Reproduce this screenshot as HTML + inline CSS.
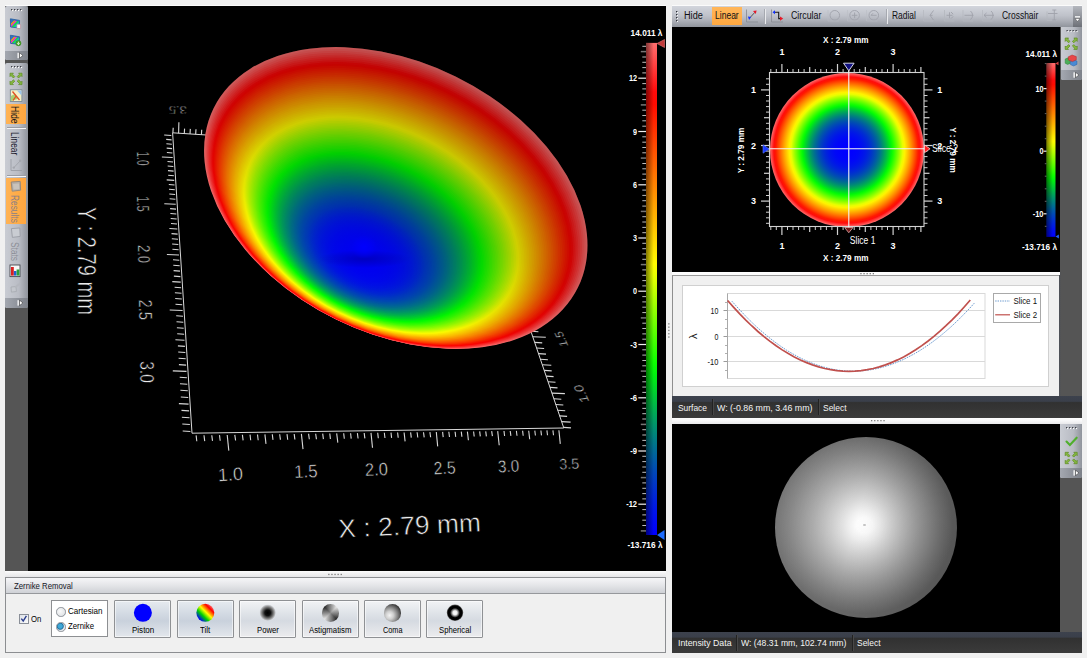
<!DOCTYPE html>
<html><head><meta charset="utf-8"><title>Surface</title>
<style>
html,body{margin:0;padding:0}
body{width:1087px;height:658px;overflow:hidden;background:#f0f0f0;position:relative;
 font-family:"Liberation Sans",sans-serif;font-size:10px;color:#000}
.abs{position:absolute}
.blk{position:absolute;background:#000}
.dk{position:absolute;background:#555}
.tb{position:absolute;background:linear-gradient(90deg,#c9ccd3 0%,#b9bcc4 60%,#8f939b 100%);border-radius:2px}
.tbh{position:absolute;background:linear-gradient(180deg,#d2d5dc 0%,#bfc2ca 45%,#adb0b8 70%,#90949c 100%)}
.status{position:absolute;background:linear-gradient(180deg,#3d424d 0%,#3a3f4a 24%,#313131 30%,#3b3b3b 100%);color:#f2f2f2;font-size:10px}
.status span{position:absolute;top:5px;white-space:nowrap}
.status i{position:absolute;top:2px;width:1px;height:17px;background:#222;border-right:1px solid #555}
svg{position:absolute;left:0;top:0;overflow:visible}
</style></head><body>

<div class="abs" style="left:5px;top:5px;width:661px;height:1px;background:#fbfbfb"></div>
<div class="abs" style="left:672px;top:5px;width:410px;height:1px;background:#fbfbfb"></div>
<div class="dk" style="left:5px;top:6px;width:23px;height:565px"></div>
<div class="blk" style="left:28px;top:6px;width:638px;height:565px"></div>
<div class="tb" style="left:5px;top:6px;width:23px;height:54px"></div>
<div class="abs" style="left:5px;top:51px;width:23px;height:9px;background:linear-gradient(90deg,#a4a8b0,#7d8189);border-radius:0 0 2px 2px"></div>
<div class="tb" style="left:5px;top:63px;width:23px;height:245px"></div>
<div class="abs" style="left:5px;top:298px;width:23px;height:10px;background:linear-gradient(90deg,#a4a8b0,#7d8189);border-radius:0 0 2px 2px"></div>
<div class="abs" style="left:6px;top:104px;width:20px;height:20px;background:linear-gradient(90deg,#ffb354,#ffa63f);border:0"></div>
<div class="abs" style="left:6px;top:178px;width:20px;height:46px;background:linear-gradient(90deg,#ffb354,#ffa63f)"></div>
<div class="abs" style="left:7px;top:128px;width:19px;height:1px;background:#f4f4f6;box-shadow:0 -1px 0 #9a9da4"></div>
<div class="abs" style="left:7px;top:176px;width:19px;height:1px;background:#f4f4f6;box-shadow:0 -1px 0 #9a9da4"></div>
<div class="abs" style="left:20.2px;top:105.8px;width:0;height:0"><div style="position:absolute;left:0;top:0;transform-origin:0 0;transform:rotate(90deg) scaleX(0.856);white-space:nowrap;font-size:10px;line-height:12px;color:#1a1a1a">Hide</div></div>
<div class="abs" style="left:20.2px;top:131.9px;width:0;height:0"><div style="position:absolute;left:0;top:0;transform-origin:0 0;transform:rotate(90deg) scaleX(0.835);white-space:nowrap;font-size:10px;line-height:12px;color:#1e1e32">Linear</div></div>
<div class="abs" style="left:20.2px;top:195.3px;width:0;height:0"><div style="position:absolute;left:0;top:0;transform-origin:0 0;transform:rotate(90deg) scaleX(0.834);white-space:nowrap;font-size:10px;line-height:12px;color:#8a7f86">Results</div></div>
<div class="abs" style="left:20.2px;top:242.0px;width:0;height:0"><div style="position:absolute;left:0;top:0;transform-origin:0 0;transform:rotate(90deg) scaleX(0.834);white-space:nowrap;font-size:10px;line-height:12px;color:#8d9098">Stats</div></div>
<div class="abs" style="left:5px;top:571px;width:661px;height:6px;background:linear-gradient(180deg,#fdfdfd,#f2f2f3 40%,#e6e6e8)"></div>
<div class="abs" style="left:5px;top:577px;width:661px;height:76px;box-sizing:border-box;border:1px solid #8c8e91;background:#f0f0f0"><div style="position:absolute;left:0;top:0;right:0;height:15px;background:linear-gradient(180deg,#f6f6f8 0%,#e4e5e8 50%,#cfd1d6 100%);border-bottom:1px solid #96989c"></div></div>
<span class="abs" style="left:14.3px;top:580.7px;font-size:9.2px;line-height:11px;white-space:nowrap;color:#15151f;transform-origin:0 50%;transform:scaleX(0.846)">Zernike Removal</span>
<div class="abs" style="left:19px;top:614px;width:8px;height:8px;border:1px solid #8a8f98;background:linear-gradient(135deg,#dfe3e8,#fafafa)"></div>
<span class="abs" style="left:31.0px;top:614.0px;font-size:9.2px;line-height:11px;white-space:nowrap;color:#000;transform-origin:0 50%;transform:scaleX(0.839)">On</span>
<div class="abs" style="left:51px;top:600px;width:57px;height:37px;box-sizing:border-box;border:1px solid #8d8f92;background:#fff"></div>
<div class="abs" style="left:56px;top:607.0px;width:7.5px;height:7.5px;border-radius:50%;border:1px solid #8b9097;background:radial-gradient(circle at 40% 40%,#fafafa 0,#d8dce0 100%)"></div>
<span class="abs" style="left:67.5px;top:606.4px;font-size:9.2px;line-height:11px;white-space:nowrap;color:#000;transform-origin:0 50%;transform:scaleX(0.876)">Cartesian</span>
<div class="abs" style="left:56px;top:622.0px;width:7.5px;height:7.5px;border-radius:50%;border:1px solid #8b9097;background:radial-gradient(circle at 40% 40%,#3fa8d8 0 30%,#1d6f9e 45%,#e4e8ec 60%)"></div>
<span class="abs" style="left:67.5px;top:621.4px;font-size:9.2px;line-height:11px;white-space:nowrap;color:#000;transform-origin:0 50%;transform:scaleX(0.848)">Zernike</span>
<div class="abs" style="left:114.3px;top:600px;width:57px;height:38px;box-sizing:border-box;border:1px solid #8f9194;border-radius:1px;background:linear-gradient(180deg,#e6eaef 0%,#d3dae3 35%,#c9d1dc 55%,#e3e7ec 100%);box-shadow:inset 0 0 0 1px rgba(255,255,255,.55)"></div>
<span class="abs" style="left:131.8px;top:625.0px;font-size:9.2px;line-height:11px;white-space:nowrap;color:#000;transform-origin:0 50%;transform:scaleX(0.872)">Piston</span>
<div class="abs" style="left:176.7px;top:600px;width:57px;height:38px;box-sizing:border-box;border:1px solid #8f9194;border-radius:1px;background:linear-gradient(180deg,#e6eaef 0%,#d3dae3 35%,#c9d1dc 55%,#e3e7ec 100%);box-shadow:inset 0 0 0 1px rgba(255,255,255,.55)"></div>
<span class="abs" style="left:200.2px;top:625.0px;font-size:9.2px;line-height:11px;white-space:nowrap;color:#000;transform-origin:0 50%;transform:scaleX(0.856)">Tilt</span>
<div class="abs" style="left:239.1px;top:600px;width:57px;height:38px;box-sizing:border-box;border:1px solid #8f9194;border-radius:1px;background:linear-gradient(180deg,#f2f3f5 0%,#dfe3e8 35%,#d5dae1 55%,#ececee 100%);box-shadow:inset 0 0 0 1px rgba(255,255,255,.55)"></div>
<span class="abs" style="left:256.8px;top:625.0px;font-size:9.2px;line-height:11px;white-space:nowrap;color:#000;transform-origin:0 50%;transform:scaleX(0.840)">Power</span>
<div class="abs" style="left:301.6px;top:600px;width:57px;height:38px;box-sizing:border-box;border:1px solid #8f9194;border-radius:1px;background:linear-gradient(180deg,#f2f3f5 0%,#dfe3e8 35%,#d5dae1 55%,#ececee 100%);box-shadow:inset 0 0 0 1px rgba(255,255,255,.55)"></div>
<span class="abs" style="left:308.9px;top:625.0px;font-size:9.2px;line-height:11px;white-space:nowrap;color:#000;transform-origin:0 50%;transform:scaleX(0.848)">Astigmatism</span>
<div class="abs" style="left:364.0px;top:600px;width:57px;height:38px;box-sizing:border-box;border:1px solid #8f9194;border-radius:1px;background:linear-gradient(180deg,#f2f3f5 0%,#dfe3e8 35%,#d5dae1 55%,#ececee 100%);box-shadow:inset 0 0 0 1px rgba(255,255,255,.55)"></div>
<span class="abs" style="left:382.8px;top:625.0px;font-size:9.2px;line-height:11px;white-space:nowrap;color:#000;transform-origin:0 50%;transform:scaleX(0.795)">Coma</span>
<div class="abs" style="left:426.4px;top:600px;width:57px;height:38px;box-sizing:border-box;border:1px solid #8f9194;border-radius:1px;background:linear-gradient(180deg,#f2f3f5 0%,#dfe3e8 35%,#d5dae1 55%,#ececee 100%);box-shadow:inset 0 0 0 1px rgba(255,255,255,.55)"></div>
<span class="abs" style="left:438.9px;top:625.0px;font-size:9.2px;line-height:11px;white-space:nowrap;color:#000;transform-origin:0 50%;transform:scaleX(0.840)">Spherical</span>
<div class="abs" style="left:321.6px;top:604.4px;width:17.2px;height:17.2px;border-radius:50%;background:radial-gradient(circle,rgba(140,140,140,.95) 0%,rgba(140,140,140,0) 75%),conic-gradient(from 315deg,#1c1c1c 0deg,#f0f0f0 90deg,#1c1c1c 180deg,#f0f0f0 270deg,#1c1c1c 360deg)"></div>
<div class="abs" style="left:384.0px;top:604.4px;width:17.2px;height:17.2px;border-radius:50%;background:radial-gradient(circle at 33% 63%,#f4f4f4 0%,#cfcfcf 24%,#858585 50%,#2e2e2e 78%,#4c4c4c 100%)"></div>
<div class="tbh" style="left:672px;top:6px;width:410px;height:21px"></div>
<div class="blk" style="left:672px;top:27px;width:388px;height:245px"></div>
<div class="dk" style="left:1060px;top:27px;width:22px;height:246px"></div>
<div class="dk" style="left:1059px;top:272px;width:23px;height:124px;background:linear-gradient(90deg,#4c5058 0,#555 2px)"></div>
<div class="abs" style="left:672px;top:275px;width:387px;height:121px;background:#f0f0f0;border-top:1px solid #9a9a9a;border-left:1px solid #8e8e8e;box-sizing:border-box"></div>
<div class="status" style="left:672px;top:396px;width:410px;height:21.5px"></div>
<div class="blk" style="left:672px;top:424px;width:388px;height:208px"></div>
<div class="dk" style="left:1060px;top:424px;width:22px;height:208px"></div>
<div class="status" style="left:672px;top:631.5px;width:410px;height:21.5px"></div>
<div class="abs" style="left:672px;top:272px;width:388px;height:3px;background:#fcfcfc"></div>
<div class="abs" style="left:672px;top:417.5px;width:410px;height:6.5px;background:linear-gradient(180deg,#fefefe 0%,#f6f6f7 50%,#e9e9eb 100%)"></div>
<div class="abs" style="left:1073px;top:6px;width:9px;height:21px;background:linear-gradient(180deg,#b4b7be,#6d7077)"></div>
<div class="abs" style="left:712px;top:7px;width:30px;height:18px;background:linear-gradient(180deg,#ffb65a,#ffa840)"></div>
<div class="abs" style="left:764.5px;top:9px;width:1px;height:15px;background:#e9eaed;box-shadow:-1px 0 0 #a6a9b0"></div>
<div class="abs" style="left:886.5px;top:9px;width:1px;height:15px;background:#e9eaed;box-shadow:-1px 0 0 #a6a9b0"></div>
<span class="abs" style="left:684.3px;top:10.3px;font-size:10.0px;line-height:12px;white-space:nowrap;color:#101014;transform-origin:0 50%;transform:scaleX(0.914)">Hide</span>
<span class="abs" style="left:715.3px;top:10.3px;font-size:10.0px;line-height:12px;white-space:nowrap;color:#101014;transform-origin:0 50%;transform:scaleX(0.853)">Linear</span>
<span class="abs" style="left:790.6px;top:10.3px;font-size:10.0px;line-height:12px;white-space:nowrap;color:#101014;transform-origin:0 50%;transform:scaleX(0.882)">Circular</span>
<span class="abs" style="left:892.0px;top:10.3px;font-size:10.0px;line-height:12px;white-space:nowrap;color:#101014;transform-origin:0 50%;transform:scaleX(0.843)">Radial</span>
<span class="abs" style="left:1001.7px;top:10.3px;font-size:10.0px;line-height:12px;white-space:nowrap;color:#101014;transform-origin:0 50%;transform:scaleX(0.848)">Crosshair</span>
<div class="abs" style="left:770px;top:72.5px;width:154px;height:154px;border-radius:50%;background:radial-gradient(circle closest-side,#0000ff 0.00%,#0000ff 2.50%,#0000ff 5.00%,#0001fe 7.50%,#0003fc 10.00%,#0005fa 12.50%,#0007f8 15.00%,#000bf4 17.50%,#0010ef 20.00%,#0015ea 22.50%,#001ce3 25.00%,#0024db 27.50%,#002dd2 30.00%,#0038c7 32.50%,#0044bb 35.00%,#0051ae 37.50%,#00609f 40.00%,#00708f 42.50%,#00827d 45.00%,#009669 47.50%,#00ab54 50.00%,#00c23d 52.50%,#00db24 55.00%,#00f609 57.50%,#19ff00 60.00%,#3fff00 62.50%,#67ff00 65.00%,#90ff00 67.50%,#bbff00 70.00%,#e7ff00 72.50%,#fff200 75.00%,#ffd600 77.50%,#ffb900 80.00%,#ff9b00 82.50%,#ff7c00 85.00%,#ff5c00 87.50%,#ff3b00 90.00%,#ff1900 92.50%,#ff0c0c 95.00%,#ff3d3d 97.50%,#ff6e6e 100.00%)"></div>
<div class="tb" style="left:1060.5px;top:27px;width:21.5px;height:53px;border-radius:0 0 2px 2px"></div>
<div class="abs" style="left:1060.5px;top:70px;width:21.5px;height:10px;background:linear-gradient(90deg,#a4a8b0,#7d8189);border-radius:0 0 2px 2px"></div>
<div class="abs" style="left:682px;top:285px;width:367px;height:102px;box-sizing:border-box;border:1px solid #d0d0d0;background:#fff"></div>
<div class="abs" style="left:993px;top:293px;width:48px;height:30px;box-sizing:border-box;border:1px solid #a9a9a9;background:#fff"></div>
<span class="abs" style="left:677.5px;top:401.6px;font-size:9.8px;line-height:12px;white-space:nowrap;color:#f4f4f4;transform-origin:0 50%;transform:scaleX(0.859)">Surface</span>
<span class="abs" style="left:716.5px;top:401.6px;font-size:9.8px;line-height:12px;white-space:nowrap;color:#f4f4f4;transform-origin:0 50%;transform:scaleX(0.901)">W: (-0.86 mm, 3.46 mm)</span>
<span class="abs" style="left:822.5px;top:401.6px;font-size:9.8px;line-height:12px;white-space:nowrap;color:#f4f4f4;transform-origin:0 50%;transform:scaleX(0.863)">Select</span>
<span class="abs" style="left:677.5px;top:636.9px;font-size:9.8px;line-height:12px;white-space:nowrap;color:#f4f4f4;transform-origin:0 50%;transform:scaleX(0.893)">Intensity Data</span>
<span class="abs" style="left:741.3px;top:636.9px;font-size:9.8px;line-height:12px;white-space:nowrap;color:#f4f4f4;transform-origin:0 50%;transform:scaleX(0.886)">W: (48.31 mm, 102.74 mm)</span>
<span class="abs" style="left:857.0px;top:636.9px;font-size:9.8px;line-height:12px;white-space:nowrap;color:#f4f4f4;transform-origin:0 50%;transform:scaleX(0.863)">Select</span>
<div class="abs" style="left:711.5px;top:399px;width:1px;height:16px;background:#222;box-shadow:1px 0 0 #484848"></div>
<div class="abs" style="left:817.5px;top:399px;width:1px;height:16px;background:#222;box-shadow:1px 0 0 #484848"></div>
<div class="abs" style="left:735.5px;top:635px;width:1px;height:16px;background:#222;box-shadow:1px 0 0 #484848"></div>
<div class="abs" style="left:852.0px;top:635px;width:1px;height:16px;background:#222;box-shadow:1px 0 0 #484848"></div>
<div class="abs" style="left:775px;top:436.5px;width:182px;height:181px;border-radius:50%;background:linear-gradient(105deg,rgba(255,255,255,.12) 0%,rgba(255,255,255,0) 45%,rgba(0,0,0,.2) 100%),radial-gradient(circle closest-side at 49.2% 48.8%,#fff 0%,#fcfcfc 9%,#eee 18%,#d6d6d6 31%,#bebebe 45%,#a8a8a8 58%,#929292 72%,#7c7c7c 86%,#686868 100%)"></div>
<div class="abs" style="left:863.4px;top:523.9px;width:2.4px;height:2.4px;border-radius:50%;background:#c4c4c4"></div>
<div class="tb" style="left:1060px;top:424px;width:22px;height:54px;border-radius:0 0 2px 2px"></div>
<div class="abs" style="left:1060px;top:468px;width:22px;height:10px;background:linear-gradient(90deg,#a4a8b0,#7d8189);border-radius:0 0 2px 2px"></div>
<svg width="1087" height="658" viewBox="0 0 1087 658" font-family="Liberation Sans, sans-serif">
<line x1="172.6" y1="132.8" x2="192.0" y2="433.2" stroke="#d8d8d8" stroke-width="1.00"/>
<line x1="164.2" y1="135.0" x2="171.3" y2="135.5" stroke="#d8d8d8" stroke-width="1.10"/>
<line x1="166.2" y1="139.4" x2="171.6" y2="139.9" stroke="#d8d8d8" stroke-width="1.10"/>
<line x1="166.4" y1="143.7" x2="171.8" y2="144.2" stroke="#d8d8d8" stroke-width="1.10"/>
<line x1="166.7" y1="148.1" x2="172.1" y2="148.6" stroke="#d8d8d8" stroke-width="1.10"/>
<line x1="166.9" y1="152.5" x2="172.4" y2="153.0" stroke="#d8d8d8" stroke-width="1.10"/>
<line x1="161.9" y1="157.0" x2="172.7" y2="157.5" stroke="#d8d8d8" stroke-width="1.10"/>
<line x1="167.5" y1="161.5" x2="173.0" y2="162.0" stroke="#d8d8d8" stroke-width="1.10"/>
<line x1="167.7" y1="166.0" x2="173.3" y2="166.5" stroke="#d8d8d8" stroke-width="1.10"/>
<line x1="168.0" y1="170.6" x2="173.6" y2="171.1" stroke="#d8d8d8" stroke-width="1.10"/>
<line x1="168.2" y1="175.2" x2="173.9" y2="175.7" stroke="#d8d8d8" stroke-width="1.10"/>
<line x1="166.7" y1="179.9" x2="174.2" y2="180.4" stroke="#d8d8d8" stroke-width="1.10"/>
<line x1="168.8" y1="184.5" x2="174.5" y2="185.0" stroke="#d8d8d8" stroke-width="1.10"/>
<line x1="169.0" y1="189.3" x2="174.8" y2="189.8" stroke="#d8d8d8" stroke-width="1.10"/>
<line x1="169.3" y1="194.0" x2="175.1" y2="194.5" stroke="#d8d8d8" stroke-width="1.10"/>
<line x1="169.6" y1="198.8" x2="175.4" y2="199.3" stroke="#d8d8d8" stroke-width="1.10"/>
<line x1="164.3" y1="203.7" x2="175.7" y2="204.2" stroke="#d8d8d8" stroke-width="1.10"/>
<line x1="170.1" y1="208.6" x2="176.0" y2="209.1" stroke="#d8d8d8" stroke-width="1.10"/>
<line x1="170.4" y1="213.5" x2="176.3" y2="214.0" stroke="#d8d8d8" stroke-width="1.10"/>
<line x1="170.7" y1="218.5" x2="176.7" y2="219.0" stroke="#d8d8d8" stroke-width="1.10"/>
<line x1="171.0" y1="223.5" x2="177.0" y2="224.0" stroke="#d8d8d8" stroke-width="1.10"/>
<line x1="169.4" y1="228.5" x2="177.3" y2="229.0" stroke="#d8d8d8" stroke-width="1.10"/>
<line x1="171.5" y1="233.6" x2="177.6" y2="234.1" stroke="#d8d8d8" stroke-width="1.10"/>
<line x1="171.8" y1="238.8" x2="178.0" y2="239.3" stroke="#d8d8d8" stroke-width="1.10"/>
<line x1="172.1" y1="244.0" x2="178.3" y2="244.5" stroke="#d8d8d8" stroke-width="1.10"/>
<line x1="172.4" y1="249.2" x2="178.6" y2="249.7" stroke="#d8d8d8" stroke-width="1.10"/>
<line x1="166.9" y1="254.5" x2="179.0" y2="255.0" stroke="#d8d8d8" stroke-width="1.10"/>
<line x1="173.0" y1="259.8" x2="179.3" y2="260.3" stroke="#d8d8d8" stroke-width="1.10"/>
<line x1="173.3" y1="265.2" x2="179.7" y2="265.7" stroke="#d8d8d8" stroke-width="1.10"/>
<line x1="173.6" y1="270.6" x2="180.0" y2="271.1" stroke="#d8d8d8" stroke-width="1.10"/>
<line x1="173.9" y1="276.1" x2="180.4" y2="276.6" stroke="#d8d8d8" stroke-width="1.10"/>
<line x1="172.3" y1="281.6" x2="180.7" y2="282.1" stroke="#d8d8d8" stroke-width="1.10"/>
<line x1="174.6" y1="287.2" x2="181.1" y2="287.7" stroke="#d8d8d8" stroke-width="1.10"/>
<line x1="174.9" y1="292.8" x2="181.5" y2="293.3" stroke="#d8d8d8" stroke-width="1.10"/>
<line x1="175.2" y1="298.5" x2="181.8" y2="299.0" stroke="#d8d8d8" stroke-width="1.10"/>
<line x1="175.5" y1="304.2" x2="182.2" y2="304.7" stroke="#d8d8d8" stroke-width="1.10"/>
<line x1="169.7" y1="310.0" x2="182.6" y2="310.5" stroke="#d8d8d8" stroke-width="1.10"/>
<line x1="176.2" y1="315.8" x2="183.0" y2="316.3" stroke="#d8d8d8" stroke-width="1.10"/>
<line x1="176.5" y1="321.7" x2="183.3" y2="322.2" stroke="#d8d8d8" stroke-width="1.10"/>
<line x1="176.9" y1="327.7" x2="183.7" y2="328.2" stroke="#d8d8d8" stroke-width="1.10"/>
<line x1="177.2" y1="333.7" x2="184.1" y2="334.2" stroke="#d8d8d8" stroke-width="1.10"/>
<line x1="175.4" y1="339.7" x2="184.5" y2="340.2" stroke="#d8d8d8" stroke-width="1.10"/>
<line x1="177.9" y1="345.9" x2="184.9" y2="346.4" stroke="#d8d8d8" stroke-width="1.10"/>
<line x1="178.2" y1="352.0" x2="185.3" y2="352.5" stroke="#d8d8d8" stroke-width="1.10"/>
<line x1="178.6" y1="358.3" x2="185.7" y2="358.8" stroke="#d8d8d8" stroke-width="1.10"/>
<line x1="178.9" y1="364.6" x2="186.1" y2="365.1" stroke="#d8d8d8" stroke-width="1.10"/>
<line x1="172.8" y1="370.9" x2="186.5" y2="371.4" stroke="#d8d8d8" stroke-width="1.10"/>
<line x1="179.7" y1="377.3" x2="186.9" y2="377.8" stroke="#d8d8d8" stroke-width="1.10"/>
<line x1="180.0" y1="383.8" x2="187.3" y2="384.3" stroke="#d8d8d8" stroke-width="1.10"/>
<line x1="180.4" y1="390.3" x2="187.8" y2="390.8" stroke="#d8d8d8" stroke-width="1.10"/>
<line x1="180.8" y1="397.0" x2="188.2" y2="397.5" stroke="#d8d8d8" stroke-width="1.10"/>
<line x1="178.9" y1="403.6" x2="188.6" y2="404.1" stroke="#d8d8d8" stroke-width="1.10"/>
<line x1="181.5" y1="410.4" x2="189.1" y2="410.9" stroke="#d8d8d8" stroke-width="1.10"/>
<line x1="181.9" y1="417.2" x2="189.5" y2="417.7" stroke="#d8d8d8" stroke-width="1.10"/>
<line x1="182.3" y1="424.0" x2="189.9" y2="424.5" stroke="#d8d8d8" stroke-width="1.10"/>
<line x1="182.7" y1="431.0" x2="190.4" y2="431.5" stroke="#d8d8d8" stroke-width="1.10"/>
<line x1="192.0" y1="433.2" x2="563.8" y2="428.0" stroke="#d8d8d8" stroke-width="1.00"/>
<line x1="196.1" y1="435.4" x2="196.8" y2="441.2" stroke="#d8d8d8" stroke-width="1.10"/>
<line x1="204.0" y1="435.3" x2="204.7" y2="441.1" stroke="#d8d8d8" stroke-width="1.10"/>
<line x1="211.8" y1="435.2" x2="212.5" y2="440.9" stroke="#d8d8d8" stroke-width="1.10"/>
<line x1="219.5" y1="435.1" x2="220.2" y2="440.8" stroke="#d8d8d8" stroke-width="1.10"/>
<line x1="227.2" y1="435.0" x2="228.8" y2="450.6" stroke="#d8d8d8" stroke-width="1.10"/>
<line x1="234.8" y1="434.8" x2="235.6" y2="440.5" stroke="#d8d8d8" stroke-width="1.10"/>
<line x1="242.4" y1="434.7" x2="243.1" y2="440.4" stroke="#d8d8d8" stroke-width="1.10"/>
<line x1="250.0" y1="434.6" x2="250.7" y2="440.3" stroke="#d8d8d8" stroke-width="1.10"/>
<line x1="257.5" y1="434.5" x2="258.2" y2="440.2" stroke="#d8d8d8" stroke-width="1.10"/>
<line x1="264.9" y1="434.4" x2="266.0" y2="443.9" stroke="#d8d8d8" stroke-width="1.10"/>
<line x1="272.3" y1="434.3" x2="273.0" y2="439.9" stroke="#d8d8d8" stroke-width="1.10"/>
<line x1="279.7" y1="434.2" x2="280.4" y2="439.8" stroke="#d8d8d8" stroke-width="1.10"/>
<line x1="287.0" y1="434.1" x2="287.7" y2="439.7" stroke="#d8d8d8" stroke-width="1.10"/>
<line x1="294.2" y1="434.0" x2="294.9" y2="439.5" stroke="#d8d8d8" stroke-width="1.10"/>
<line x1="301.4" y1="433.9" x2="303.0" y2="449.1" stroke="#d8d8d8" stroke-width="1.10"/>
<line x1="308.6" y1="433.8" x2="309.3" y2="439.3" stroke="#d8d8d8" stroke-width="1.10"/>
<line x1="315.7" y1="433.7" x2="316.4" y2="439.2" stroke="#d8d8d8" stroke-width="1.10"/>
<line x1="322.7" y1="433.6" x2="323.4" y2="439.1" stroke="#d8d8d8" stroke-width="1.10"/>
<line x1="329.8" y1="433.5" x2="330.4" y2="439.0" stroke="#d8d8d8" stroke-width="1.10"/>
<line x1="336.7" y1="433.4" x2="337.8" y2="442.6" stroke="#d8d8d8" stroke-width="1.10"/>
<line x1="343.7" y1="433.3" x2="344.3" y2="438.7" stroke="#d8d8d8" stroke-width="1.10"/>
<line x1="350.6" y1="433.2" x2="351.2" y2="438.6" stroke="#d8d8d8" stroke-width="1.10"/>
<line x1="357.4" y1="433.1" x2="358.1" y2="438.5" stroke="#d8d8d8" stroke-width="1.10"/>
<line x1="364.2" y1="433.0" x2="364.9" y2="438.4" stroke="#d8d8d8" stroke-width="1.10"/>
<line x1="371.0" y1="432.9" x2="372.5" y2="447.7" stroke="#d8d8d8" stroke-width="1.10"/>
<line x1="377.7" y1="432.8" x2="378.3" y2="438.2" stroke="#d8d8d8" stroke-width="1.10"/>
<line x1="384.3" y1="432.7" x2="385.0" y2="438.0" stroke="#d8d8d8" stroke-width="1.10"/>
<line x1="391.0" y1="432.6" x2="391.6" y2="437.9" stroke="#d8d8d8" stroke-width="1.10"/>
<line x1="397.6" y1="432.5" x2="398.2" y2="437.8" stroke="#d8d8d8" stroke-width="1.10"/>
<line x1="404.1" y1="432.5" x2="405.1" y2="441.4" stroke="#d8d8d8" stroke-width="1.10"/>
<line x1="410.6" y1="432.4" x2="411.3" y2="437.6" stroke="#d8d8d8" stroke-width="1.10"/>
<line x1="417.1" y1="432.3" x2="417.8" y2="437.5" stroke="#d8d8d8" stroke-width="1.10"/>
<line x1="423.5" y1="432.2" x2="424.2" y2="437.4" stroke="#d8d8d8" stroke-width="1.10"/>
<line x1="429.9" y1="432.1" x2="430.6" y2="437.3" stroke="#d8d8d8" stroke-width="1.10"/>
<line x1="436.3" y1="432.0" x2="437.7" y2="446.4" stroke="#d8d8d8" stroke-width="1.10"/>
<line x1="442.6" y1="431.9" x2="443.2" y2="437.1" stroke="#d8d8d8" stroke-width="1.10"/>
<line x1="448.8" y1="431.8" x2="449.5" y2="437.0" stroke="#d8d8d8" stroke-width="1.10"/>
<line x1="455.1" y1="431.7" x2="455.7" y2="436.9" stroke="#d8d8d8" stroke-width="1.10"/>
<line x1="461.3" y1="431.6" x2="461.9" y2="436.8" stroke="#d8d8d8" stroke-width="1.10"/>
<line x1="467.4" y1="431.6" x2="468.4" y2="440.3" stroke="#d8d8d8" stroke-width="1.10"/>
<line x1="473.6" y1="431.5" x2="474.2" y2="436.5" stroke="#d8d8d8" stroke-width="1.10"/>
<line x1="479.7" y1="431.4" x2="480.3" y2="436.4" stroke="#d8d8d8" stroke-width="1.10"/>
<line x1="485.7" y1="431.3" x2="486.4" y2="436.3" stroke="#d8d8d8" stroke-width="1.10"/>
<line x1="491.7" y1="431.2" x2="492.4" y2="436.2" stroke="#d8d8d8" stroke-width="1.10"/>
<line x1="497.7" y1="431.1" x2="499.2" y2="445.2" stroke="#d8d8d8" stroke-width="1.10"/>
<line x1="504.0" y1="431.0" x2="504.6" y2="436.0" stroke="#d8d8d8" stroke-width="1.10"/>
<line x1="510.2" y1="431.0" x2="510.9" y2="435.9" stroke="#d8d8d8" stroke-width="1.10"/>
<line x1="516.4" y1="430.9" x2="517.0" y2="435.8" stroke="#d8d8d8" stroke-width="1.10"/>
<line x1="522.6" y1="430.8" x2="523.2" y2="435.7" stroke="#d8d8d8" stroke-width="1.10"/>
<line x1="528.7" y1="430.7" x2="529.7" y2="439.2" stroke="#d8d8d8" stroke-width="1.10"/>
<line x1="534.8" y1="430.6" x2="535.4" y2="435.5" stroke="#d8d8d8" stroke-width="1.10"/>
<line x1="540.9" y1="430.5" x2="541.5" y2="435.4" stroke="#d8d8d8" stroke-width="1.10"/>
<line x1="546.9" y1="430.4" x2="547.5" y2="435.3" stroke="#d8d8d8" stroke-width="1.10"/>
<line x1="552.9" y1="430.4" x2="553.5" y2="435.2" stroke="#d8d8d8" stroke-width="1.10"/>
<line x1="558.9" y1="430.3" x2="560.3" y2="443.9" stroke="#d8d8d8" stroke-width="1.10"/>
<line x1="563.8" y1="428.0" x2="524.0" y2="311.0" stroke="#d8d8d8" stroke-width="1.00"/>
<line x1="563.5" y1="427.4" x2="571.0" y2="427.9" stroke="#d8d8d8" stroke-width="1.10"/>
<line x1="561.6" y1="421.6" x2="570.6" y2="422.1" stroke="#d8d8d8" stroke-width="1.10"/>
<line x1="559.6" y1="415.9" x2="567.1" y2="416.4" stroke="#d8d8d8" stroke-width="1.10"/>
<line x1="557.7" y1="410.2" x2="565.2" y2="410.7" stroke="#d8d8d8" stroke-width="1.10"/>
<line x1="555.8" y1="404.5" x2="563.3" y2="405.0" stroke="#d8d8d8" stroke-width="1.10"/>
<line x1="553.8" y1="398.8" x2="561.3" y2="399.3" stroke="#d8d8d8" stroke-width="1.10"/>
<line x1="551.9" y1="393.1" x2="564.9" y2="393.6" stroke="#d8d8d8" stroke-width="1.10"/>
<line x1="550.0" y1="387.4" x2="557.5" y2="387.9" stroke="#d8d8d8" stroke-width="1.10"/>
<line x1="548.0" y1="381.7" x2="555.5" y2="382.2" stroke="#d8d8d8" stroke-width="1.10"/>
<line x1="546.1" y1="376.1" x2="553.6" y2="376.6" stroke="#d8d8d8" stroke-width="1.10"/>
<line x1="544.2" y1="370.4" x2="551.7" y2="370.9" stroke="#d8d8d8" stroke-width="1.10"/>
<line x1="542.3" y1="364.8" x2="551.3" y2="365.3" stroke="#d8d8d8" stroke-width="1.10"/>
<line x1="540.4" y1="359.2" x2="547.9" y2="359.7" stroke="#d8d8d8" stroke-width="1.10"/>
<line x1="538.5" y1="353.6" x2="546.0" y2="354.1" stroke="#d8d8d8" stroke-width="1.10"/>
<line x1="536.6" y1="348.0" x2="544.1" y2="348.5" stroke="#d8d8d8" stroke-width="1.10"/>
<line x1="534.7" y1="342.4" x2="542.2" y2="342.9" stroke="#d8d8d8" stroke-width="1.10"/>
<line x1="532.8" y1="336.8" x2="545.8" y2="337.3" stroke="#d8d8d8" stroke-width="1.10"/>
<line x1="530.9" y1="331.3" x2="538.4" y2="331.8" stroke="#d8d8d8" stroke-width="1.10"/>
<line x1="529.0" y1="325.7" x2="536.5" y2="326.2" stroke="#d8d8d8" stroke-width="1.10"/>
<line x1="527.1" y1="320.2" x2="534.6" y2="320.7" stroke="#d8d8d8" stroke-width="1.10"/>
<line x1="172.6" y1="132.8" x2="260.0" y2="138.5" stroke="#d8d8d8" stroke-width="1.00"/>
<line x1="172.9" y1="132.8" x2="173.2" y2="127.8" stroke="#d8d8d8" stroke-width="1.10"/>
<line x1="178.6" y1="133.2" x2="178.9" y2="122.2" stroke="#d8d8d8" stroke-width="1.10"/>
<line x1="184.3" y1="133.6" x2="184.6" y2="128.6" stroke="#d8d8d8" stroke-width="1.10"/>
<line x1="190.0" y1="133.9" x2="190.3" y2="128.9" stroke="#d8d8d8" stroke-width="1.10"/>
<line x1="195.7" y1="134.3" x2="196.0" y2="129.3" stroke="#d8d8d8" stroke-width="1.10"/>
<line x1="201.4" y1="134.7" x2="201.7" y2="129.7" stroke="#d8d8d8" stroke-width="1.10"/>
<line x1="207.1" y1="135.1" x2="207.4" y2="130.1" stroke="#d8d8d8" stroke-width="1.10"/>
<line x1="212.8" y1="135.4" x2="213.1" y2="130.4" stroke="#d8d8d8" stroke-width="1.10"/>
<line x1="218.5" y1="135.8" x2="218.8" y2="130.8" stroke="#d8d8d8" stroke-width="1.10"/>
<line x1="224.2" y1="136.2" x2="224.5" y2="131.2" stroke="#d8d8d8" stroke-width="1.10"/>
<line x1="229.9" y1="136.5" x2="230.2" y2="131.5" stroke="#d8d8d8" stroke-width="1.10"/>
<line x1="235.6" y1="136.9" x2="235.9" y2="131.9" stroke="#d8d8d8" stroke-width="1.10"/>
<defs><radialGradient id="cusp"><stop offset="0" stop-color="#000" stop-opacity="0.2"/><stop offset="1" stop-color="#000" stop-opacity="0"/></radialGradient><radialGradient id="cuspb"><stop offset="0" stop-color="#0000f8" stop-opacity="0.6"/><stop offset="0.5" stop-color="#0000f0" stop-opacity="0.35"/><stop offset="1" stop-color="#0000f0" stop-opacity="0"/></radialGradient><radialGradient id="cuspl"><stop offset="0" stop-color="#0000ff" stop-opacity="0.9"/><stop offset="1" stop-color="#0000ff" stop-opacity="0"/></radialGradient></defs><defs><linearGradient id="shade" gradientUnits="userSpaceOnUse" x1="0" y1="-132.5" x2="0" y2="138.3"><stop offset="0" stop-color="#000" stop-opacity="0.25"/><stop offset="0.5" stop-color="#000" stop-opacity="0.18"/><stop offset="0.72" stop-color="#000" stop-opacity="0.09"/><stop offset="0.86" stop-color="#000" stop-opacity="0.02"/><stop offset="1" stop-color="#000" stop-opacity="0"/></linearGradient></defs><g transform="rotate(26.20)">
<ellipse cx="442.5" cy="2.9" rx="203.0" ry="135.4" fill="#ff6e6e"/>
<ellipse cx="442.5" cy="3.8" rx="201.5" ry="134.4" fill="#ff6161"/>
<ellipse cx="442.4" cy="4.7" rx="200.0" ry="133.4" fill="#ff5454"/>
<ellipse cx="442.4" cy="5.6" rx="198.5" ry="132.4" fill="#ff4646"/>
<ellipse cx="442.4" cy="6.5" rx="197.0" ry="131.4" fill="#ff3939"/>
<ellipse cx="442.3" cy="7.4" rx="195.5" ry="130.4" fill="#ff2c2c"/>
<ellipse cx="442.3" cy="8.2" rx="194.0" ry="129.4" fill="#ff2020"/>
<ellipse cx="442.3" cy="9.1" rx="192.5" ry="128.4" fill="#ff1313"/>
<ellipse cx="442.3" cy="9.9" rx="191.0" ry="127.4" fill="#ff0606"/>
<ellipse cx="442.2" cy="10.8" rx="189.5" ry="126.4" fill="#ff0500"/>
<ellipse cx="442.2" cy="11.6" rx="188.0" ry="125.4" fill="#ff0e00"/>
<ellipse cx="442.2" cy="12.5" rx="186.5" ry="124.4" fill="#ff1700"/>
<ellipse cx="442.1" cy="13.3" rx="185.0" ry="123.4" fill="#ff2000"/>
<ellipse cx="442.1" cy="14.1" rx="183.6" ry="122.4" fill="#ff2900"/>
<ellipse cx="442.1" cy="14.9" rx="182.1" ry="121.5" fill="#ff3200"/>
<ellipse cx="442.0" cy="15.8" rx="180.6" ry="120.5" fill="#ff3b00"/>
<ellipse cx="442.0" cy="16.6" rx="179.1" ry="119.5" fill="#ff4400"/>
<ellipse cx="442.0" cy="17.4" rx="177.7" ry="118.5" fill="#ff4d00"/>
<ellipse cx="442.0" cy="18.2" rx="176.2" ry="117.5" fill="#ff5500"/>
<ellipse cx="441.9" cy="19.0" rx="174.8" ry="116.6" fill="#ff5e00"/>
<ellipse cx="441.9" cy="19.7" rx="173.3" ry="115.6" fill="#ff6700"/>
<ellipse cx="441.9" cy="20.5" rx="171.9" ry="114.6" fill="#ff6f00"/>
<ellipse cx="441.8" cy="21.3" rx="170.4" ry="113.7" fill="#ff7800"/>
<ellipse cx="441.8" cy="22.0" rx="169.0" ry="112.7" fill="#ff8000"/>
<ellipse cx="441.8" cy="22.8" rx="167.5" ry="111.7" fill="#ff8800"/>
<ellipse cx="441.8" cy="23.6" rx="166.1" ry="110.8" fill="#ff9100"/>
<ellipse cx="441.7" cy="24.3" rx="164.6" ry="109.8" fill="#ff9900"/>
<ellipse cx="441.7" cy="25.0" rx="163.2" ry="108.8" fill="#ffa100"/>
<ellipse cx="441.7" cy="25.8" rx="161.8" ry="107.9" fill="#ffa900"/>
<ellipse cx="441.7" cy="26.5" rx="160.3" ry="106.9" fill="#ffb100"/>
<ellipse cx="441.6" cy="27.2" rx="158.9" ry="106.0" fill="#ffb900"/>
<ellipse cx="441.6" cy="28.0" rx="157.5" ry="105.0" fill="#ffc100"/>
<ellipse cx="441.6" cy="28.7" rx="156.0" ry="104.1" fill="#ffc800"/>
<ellipse cx="441.6" cy="29.4" rx="154.6" ry="103.1" fill="#ffd000"/>
<ellipse cx="441.5" cy="30.1" rx="153.2" ry="102.2" fill="#ffd800"/>
<ellipse cx="441.5" cy="30.8" rx="151.8" ry="101.2" fill="#ffdf00"/>
<ellipse cx="441.5" cy="31.4" rx="150.4" ry="100.3" fill="#ffe700"/>
<ellipse cx="441.5" cy="32.1" rx="149.0" ry="99.4" fill="#ffee00"/>
<ellipse cx="441.4" cy="32.8" rx="147.5" ry="98.4" fill="#fff600"/>
<ellipse cx="441.4" cy="33.5" rx="146.1" ry="97.5" fill="#fffd00"/>
<ellipse cx="441.4" cy="34.1" rx="144.7" ry="96.5" fill="#f6ff00"/>
<ellipse cx="441.4" cy="34.8" rx="143.3" ry="95.6" fill="#eaff00"/>
<ellipse cx="441.3" cy="35.4" rx="141.9" ry="94.7" fill="#deff00"/>
<ellipse cx="441.3" cy="36.1" rx="140.5" ry="93.7" fill="#d2ff00"/>
<ellipse cx="441.3" cy="36.7" rx="139.1" ry="92.8" fill="#c6ff00"/>
<ellipse cx="441.3" cy="37.4" rx="137.8" ry="91.9" fill="#bbff00"/>
<ellipse cx="441.2" cy="38.0" rx="136.4" ry="91.0" fill="#afff00"/>
<ellipse cx="441.2" cy="38.6" rx="135.0" ry="90.0" fill="#a4ff00"/>
<ellipse cx="441.2" cy="39.2" rx="133.6" ry="89.1" fill="#98ff00"/>
<ellipse cx="441.2" cy="39.8" rx="132.2" ry="88.2" fill="#8dff00"/>
<ellipse cx="441.2" cy="40.4" rx="130.8" ry="87.3" fill="#82ff00"/>
<ellipse cx="441.1" cy="41.0" rx="129.4" ry="86.3" fill="#77ff00"/>
<ellipse cx="441.1" cy="41.6" rx="128.1" ry="85.4" fill="#6cff00"/>
<ellipse cx="441.1" cy="42.2" rx="126.7" ry="84.5" fill="#61ff00"/>
<ellipse cx="441.1" cy="42.8" rx="125.3" ry="83.6" fill="#57ff00"/>
<ellipse cx="441.0" cy="43.4" rx="123.9" ry="82.7" fill="#4cff00"/>
<ellipse cx="441.0" cy="43.9" rx="122.6" ry="81.8" fill="#42ff00"/>
<ellipse cx="441.0" cy="44.5" rx="121.2" ry="80.8" fill="#37ff00"/>
<ellipse cx="441.0" cy="45.0" rx="119.8" ry="79.9" fill="#2dff00"/>
<ellipse cx="441.0" cy="45.6" rx="118.5" ry="79.0" fill="#23ff00"/>
<ellipse cx="440.9" cy="46.1" rx="117.1" ry="78.1" fill="#19ff00"/>
<ellipse cx="440.9" cy="46.7" rx="115.8" ry="77.2" fill="#0fff00"/>
<ellipse cx="440.9" cy="47.2" rx="114.4" ry="76.3" fill="#05ff00"/>
<ellipse cx="440.9" cy="47.7" rx="113.1" ry="75.4" fill="#00fb04"/>
<ellipse cx="440.9" cy="48.3" rx="111.7" ry="74.5" fill="#00f40b"/>
<ellipse cx="440.8" cy="48.8" rx="110.3" ry="73.6" fill="#00ed12"/>
<ellipse cx="440.8" cy="49.3" rx="109.0" ry="72.7" fill="#00e619"/>
<ellipse cx="440.8" cy="49.8" rx="107.7" ry="71.8" fill="#00df20"/>
<ellipse cx="440.8" cy="50.3" rx="106.3" ry="70.9" fill="#00d827"/>
<ellipse cx="440.8" cy="50.8" rx="105.0" ry="70.0" fill="#00d12e"/>
<ellipse cx="440.8" cy="51.2" rx="103.6" ry="69.1" fill="#00ca35"/>
<ellipse cx="440.7" cy="51.7" rx="102.3" ry="68.2" fill="#00c43b"/>
<ellipse cx="440.7" cy="52.2" rx="100.9" ry="67.3" fill="#00bd42"/>
<ellipse cx="440.7" cy="52.7" rx="99.6" ry="66.4" fill="#00b748"/>
<ellipse cx="440.7" cy="53.1" rx="98.3" ry="65.5" fill="#00b14e"/>
<ellipse cx="440.7" cy="53.6" rx="96.9" ry="64.7" fill="#00ab54"/>
<ellipse cx="440.7" cy="54.0" rx="95.6" ry="63.8" fill="#00a55a"/>
<ellipse cx="440.6" cy="54.5" rx="94.3" ry="62.9" fill="#009f60"/>
<ellipse cx="440.6" cy="54.9" rx="92.9" ry="62.0" fill="#009a65"/>
<ellipse cx="440.6" cy="55.3" rx="91.6" ry="61.1" fill="#00946b"/>
<ellipse cx="440.6" cy="55.7" rx="90.3" ry="60.2" fill="#008f70"/>
<ellipse cx="440.6" cy="56.2" rx="89.0" ry="59.3" fill="#008a75"/>
<ellipse cx="440.6" cy="56.6" rx="87.6" ry="58.5" fill="#00857a"/>
<ellipse cx="440.6" cy="57.0" rx="86.3" ry="57.6" fill="#00807f"/>
<ellipse cx="440.5" cy="57.4" rx="85.0" ry="56.7" fill="#007b84"/>
<ellipse cx="440.5" cy="57.8" rx="83.7" ry="55.8" fill="#007689"/>
<ellipse cx="440.5" cy="58.2" rx="82.4" ry="54.9" fill="#00718e"/>
<ellipse cx="440.5" cy="58.5" rx="81.0" ry="54.1" fill="#006d92"/>
<ellipse cx="440.5" cy="58.9" rx="79.7" ry="53.2" fill="#006897"/>
<ellipse cx="440.5" cy="59.3" rx="78.4" ry="52.3" fill="#00649b"/>
<ellipse cx="440.5" cy="59.6" rx="77.1" ry="51.4" fill="#00609f"/>
<ellipse cx="440.4" cy="60.0" rx="75.8" ry="50.6" fill="#005ca3"/>
<ellipse cx="440.4" cy="60.4" rx="74.5" ry="49.7" fill="#0058a7"/>
<ellipse cx="440.4" cy="60.7" rx="73.2" ry="48.8" fill="#0054ab"/>
<ellipse cx="440.4" cy="61.0" rx="71.9" ry="47.9" fill="#0050af"/>
<ellipse cx="440.4" cy="61.4" rx="70.6" ry="47.1" fill="#004cb3"/>
<ellipse cx="440.4" cy="61.7" rx="69.3" ry="46.2" fill="#0049b6"/>
<ellipse cx="440.4" cy="62.0" rx="68.0" ry="45.3" fill="#0045ba"/>
<ellipse cx="440.4" cy="62.3" rx="66.7" ry="44.5" fill="#0042bd"/>
<ellipse cx="440.3" cy="62.6" rx="65.4" ry="43.6" fill="#003fc0"/>
<ellipse cx="440.3" cy="62.9" rx="64.1" ry="42.7" fill="#003cc3"/>
<ellipse cx="440.3" cy="63.2" rx="62.8" ry="41.9" fill="#0039c6"/>
<ellipse cx="440.3" cy="63.5" rx="61.5" ry="41.0" fill="#0036c9"/>
<ellipse cx="440.3" cy="63.8" rx="60.2" ry="40.1" fill="#0033cc"/>
<ellipse cx="440.3" cy="64.1" rx="58.9" ry="39.3" fill="#0030cf"/>
<ellipse cx="440.3" cy="64.4" rx="57.6" ry="38.4" fill="#002dd2"/>
<ellipse cx="440.3" cy="64.6" rx="56.3" ry="37.5" fill="#002bd4"/>
<ellipse cx="440.3" cy="64.9" rx="55.0" ry="36.7" fill="#0028d7"/>
<ellipse cx="440.3" cy="65.2" rx="53.7" ry="35.8" fill="#0026d9"/>
<ellipse cx="440.2" cy="65.4" rx="52.4" ry="35.0" fill="#0024db"/>
<ellipse cx="440.2" cy="65.6" rx="51.1" ry="34.1" fill="#0021de"/>
<ellipse cx="440.2" cy="65.9" rx="49.8" ry="33.2" fill="#001fe0"/>
<ellipse cx="440.2" cy="66.1" rx="48.5" ry="32.4" fill="#001de2"/>
<ellipse cx="440.2" cy="66.3" rx="47.3" ry="31.5" fill="#001be4"/>
<ellipse cx="440.2" cy="66.6" rx="46.0" ry="30.7" fill="#0019e6"/>
<ellipse cx="440.2" cy="66.8" rx="44.7" ry="29.8" fill="#0018e7"/>
<ellipse cx="440.2" cy="67.0" rx="43.4" ry="28.9" fill="#0016e9"/>
<ellipse cx="440.2" cy="67.2" rx="42.1" ry="28.1" fill="#0014eb"/>
<ellipse cx="440.2" cy="67.4" rx="40.8" ry="27.2" fill="#0013ec"/>
<ellipse cx="440.2" cy="67.6" rx="39.5" ry="26.4" fill="#0011ee"/>
<ellipse cx="440.2" cy="67.7" rx="38.3" ry="25.5" fill="#0010ef"/>
<ellipse cx="440.2" cy="67.9" rx="37.0" ry="24.7" fill="#000ef1"/>
<ellipse cx="440.2" cy="68.1" rx="35.7" ry="23.8" fill="#000df2"/>
<ellipse cx="440.1" cy="68.3" rx="34.4" ry="23.0" fill="#000cf3"/>
<ellipse cx="440.1" cy="68.4" rx="33.1" ry="22.1" fill="#000bf4"/>
<ellipse cx="440.1" cy="68.6" rx="31.9" ry="21.3" fill="#000af5"/>
<ellipse cx="440.1" cy="68.7" rx="30.6" ry="20.4" fill="#0009f6"/>
<ellipse cx="440.1" cy="68.9" rx="29.3" ry="19.5" fill="#0008f7"/>
<ellipse cx="440.1" cy="69.0" rx="28.0" ry="18.7" fill="#0007f8"/>
<ellipse cx="440.1" cy="69.1" rx="26.7" ry="17.8" fill="#0006f9"/>
<ellipse cx="440.1" cy="69.2" rx="25.5" ry="17.0" fill="#0006f9"/>
<ellipse cx="440.1" cy="69.4" rx="24.2" ry="16.1" fill="#0005fa"/>
<ellipse cx="440.1" cy="69.5" rx="22.9" ry="15.3" fill="#0004fb"/>
<ellipse cx="440.1" cy="69.6" rx="21.6" ry="14.4" fill="#0004fb"/>
<ellipse cx="440.1" cy="69.7" rx="20.4" ry="13.6" fill="#0003fc"/>
<ellipse cx="440.1" cy="69.8" rx="19.1" ry="12.7" fill="#0003fc"/>
<ellipse cx="440.1" cy="69.9" rx="17.8" ry="11.9" fill="#0002fd"/>
<ellipse cx="440.1" cy="69.9" rx="16.5" ry="11.0" fill="#0002fd"/>
<ellipse cx="440.1" cy="70.0" rx="15.3" ry="10.2" fill="#0001fe"/>
<ellipse cx="440.1" cy="70.1" rx="14.0" ry="9.3" fill="#0001fe"/>
<ellipse cx="440.1" cy="70.1" rx="12.7" ry="8.5" fill="#0001fe"/>
<ellipse cx="440.1" cy="70.2" rx="11.5" ry="7.6" fill="#0001fe"/>
<ellipse cx="440.1" cy="70.3" rx="10.2" ry="6.8" fill="#0001fe"/>
<ellipse cx="440.1" cy="70.3" rx="8.9" ry="5.9" fill="#0000ff"/>
<ellipse cx="440.1" cy="70.3" rx="7.6" ry="5.1" fill="#0000ff"/>
<ellipse cx="440.1" cy="70.4" rx="6.4" ry="4.2" fill="#0000ff"/>
<ellipse cx="440.1" cy="70.4" rx="5.1" ry="3.4" fill="#0000ff"/>
<ellipse cx="440.1" cy="70.4" rx="3.8" ry="2.5" fill="#0000ff"/>
<ellipse cx="440.1" cy="70.4" rx="2.5" ry="1.7" fill="#0000ff"/>
<ellipse cx="440.1" cy="70.4" rx="1.3" ry="0.8" fill="#0000ff"/>
<ellipse cx="442.5" cy="2.9" rx="203.0" ry="135.4" fill="url(#shade)"/>
</g>
<ellipse cx="366" cy="252" rx="62" ry="42" transform="rotate(26 366 252)" fill="url(#cuspb)"/>
<ellipse cx="364" cy="259" rx="46" ry="9" fill="url(#cusp)"/>
<ellipse cx="364" cy="247" rx="13" ry="12" fill="url(#cuspl)"/>
<text transform="translate(136.5 158.5) rotate(90.0)" font-size="16.0" text-anchor="middle" fill="#ececec" font-weight="normal" textLength="14.0" lengthAdjust="spacingAndGlyphs" stroke="#000" stroke-width="0.55">1.0</text>
<text transform="translate(137.0 204.0) rotate(90.0)" font-size="17.0" text-anchor="middle" fill="#ececec" font-weight="normal" textLength="15.3" lengthAdjust="spacingAndGlyphs" stroke="#000" stroke-width="0.55">1.5</text>
<text transform="translate(137.5 254.0) rotate(90.0)" font-size="17.0" text-anchor="middle" fill="#ececec" font-weight="normal" textLength="18.0" lengthAdjust="spacingAndGlyphs" stroke="#000" stroke-width="0.55">2.0</text>
<text transform="translate(139.0 309.8) rotate(90.0)" font-size="19.0" text-anchor="middle" fill="#ececec" font-weight="normal" textLength="20.6" lengthAdjust="spacingAndGlyphs" stroke="#000" stroke-width="0.55">2.5</text>
<text transform="translate(140.0 372.0) rotate(90.0)" font-size="21.0" text-anchor="middle" fill="#ececec" font-weight="normal" textLength="21.6" lengthAdjust="spacingAndGlyphs" stroke="#000" stroke-width="0.55">3.0</text>
<text transform="translate(77.5 261.0) rotate(90.0)" font-size="25.0" text-anchor="middle" fill="#ececec" font-weight="normal" textLength="108.0" lengthAdjust="spacingAndGlyphs" stroke="#000" stroke-width="0.55">Y : 2.79 mm</text>
<text transform="translate(177.8 105.5) rotate(180.0)" font-size="11.5" text-anchor="middle" fill="#ececec" font-weight="normal" textLength="18.0" lengthAdjust="spacingAndGlyphs" stroke="#000" stroke-width="0.55">3.5</text>
<text transform="translate(230.8 480.5) rotate(-3.0)" font-size="18.0" text-anchor="middle" fill="#ececec" font-weight="normal" textLength="25.0" lengthAdjust="spacingAndGlyphs" stroke="#000" stroke-width="0.55">1.0</text>
<text transform="translate(306.2 477.5) rotate(-3.0)" font-size="18.0" text-anchor="middle" fill="#ececec" font-weight="normal" textLength="23.5" lengthAdjust="spacingAndGlyphs" stroke="#000" stroke-width="0.55">1.5</text>
<text transform="translate(376.8 475.5) rotate(-3.0)" font-size="18.0" text-anchor="middle" fill="#ececec" font-weight="normal" textLength="23.0" lengthAdjust="spacingAndGlyphs" stroke="#000" stroke-width="0.55">2.0</text>
<text transform="translate(445.0 474.0) rotate(-3.0)" font-size="18.0" text-anchor="middle" fill="#ececec" font-weight="normal" textLength="21.8" lengthAdjust="spacingAndGlyphs" stroke="#000" stroke-width="0.55">2.5</text>
<text transform="translate(508.8 472.0) rotate(-3.0)" font-size="17.0" text-anchor="middle" fill="#ececec" font-weight="normal" textLength="21.2" lengthAdjust="spacingAndGlyphs" stroke="#000" stroke-width="0.55">3.0</text>
<text transform="translate(569.5 469.0) rotate(-3.0)" font-size="15.0" text-anchor="middle" fill="#ececec" font-weight="normal" textLength="20.0" lengthAdjust="spacingAndGlyphs" stroke="#000" stroke-width="0.55">3.5</text>
<text transform="translate(410.0 534.5) rotate(-2.6)" font-size="26.0" text-anchor="middle" fill="#ececec" font-weight="normal" textLength="142.5" lengthAdjust="spacingAndGlyphs" stroke="#000" stroke-width="0.55">X : 2.79 mm</text>
<text transform="matrix(-0.45 -1.0 0.99 -0.15 589.5 401.7)" font-size="12.5" fill="#e4e4e4" stroke="#000" stroke-width="0.4">1.0</text>
<text transform="matrix(-0.42 -0.95 0.99 -0.15 568.5 346)" font-size="11.5" fill="#e4e4e4" stroke="#000" stroke-width="0.4">1.5</text>
<defs><linearGradient id="cb" x1="0" y1="0" x2="0" y2="1">
<stop offset="0.000" stop-color="#ff6e6e"/>
<stop offset="0.025" stop-color="#ff5555"/>
<stop offset="0.050" stop-color="#ff3c3c"/>
<stop offset="0.075" stop-color="#ff2323"/>
<stop offset="0.100" stop-color="#ff0a0a"/>
<stop offset="0.125" stop-color="#ff0b00"/>
<stop offset="0.150" stop-color="#ff1e00"/>
<stop offset="0.175" stop-color="#ff3000"/>
<stop offset="0.200" stop-color="#ff4300"/>
<stop offset="0.225" stop-color="#ff5500"/>
<stop offset="0.250" stop-color="#ff6700"/>
<stop offset="0.275" stop-color="#ff7a00"/>
<stop offset="0.300" stop-color="#ff8c00"/>
<stop offset="0.325" stop-color="#ff9f00"/>
<stop offset="0.350" stop-color="#ffb100"/>
<stop offset="0.375" stop-color="#ffc400"/>
<stop offset="0.400" stop-color="#ffd600"/>
<stop offset="0.425" stop-color="#ffe900"/>
<stop offset="0.450" stop-color="#fffb00"/>
<stop offset="0.475" stop-color="#e6ff00"/>
<stop offset="0.500" stop-color="#c7ff00"/>
<stop offset="0.525" stop-color="#a8ff00"/>
<stop offset="0.550" stop-color="#89ff00"/>
<stop offset="0.575" stop-color="#6aff00"/>
<stop offset="0.600" stop-color="#4bff00"/>
<stop offset="0.625" stop-color="#2cff00"/>
<stop offset="0.650" stop-color="#0cff00"/>
<stop offset="0.675" stop-color="#00f00f"/>
<stop offset="0.700" stop-color="#00d926"/>
<stop offset="0.725" stop-color="#00c23d"/>
<stop offset="0.750" stop-color="#00ab54"/>
<stop offset="0.775" stop-color="#00956a"/>
<stop offset="0.800" stop-color="#00807f"/>
<stop offset="0.825" stop-color="#006c93"/>
<stop offset="0.850" stop-color="#0058a7"/>
<stop offset="0.875" stop-color="#0045ba"/>
<stop offset="0.900" stop-color="#0034cb"/>
<stop offset="0.925" stop-color="#0024db"/>
<stop offset="0.950" stop-color="#0015ea"/>
<stop offset="0.975" stop-color="#0009f6"/>
<stop offset="1.000" stop-color="#0000ff"/>
</linearGradient><linearGradient id="cbs" x1="0" y1="0" x2="1" y2="0"><stop offset="0" stop-color="#000" stop-opacity="0.5"/><stop offset="0.7" stop-color="#000" stop-opacity="0"/></linearGradient></defs>
<rect x="646" y="42.9" width="11" height="492.1" fill="url(#cb)"/>
<rect x="646" y="42.9" width="11" height="492.1" fill="url(#cbs)"/>
<line x1="640.8" y1="530.9" x2="646.0" y2="530.9" stroke="#777" stroke-width="1.50"/>
<line x1="642.3" y1="525.5" x2="646.0" y2="525.5" stroke="#bdbdbd" stroke-width="1.00"/>
<line x1="642.3" y1="520.2" x2="646.0" y2="520.2" stroke="#bdbdbd" stroke-width="1.00"/>
<line x1="642.3" y1="514.9" x2="646.0" y2="514.9" stroke="#bdbdbd" stroke-width="1.00"/>
<line x1="642.3" y1="509.6" x2="646.0" y2="509.6" stroke="#bdbdbd" stroke-width="1.00"/>
<line x1="638.3" y1="504.2" x2="646.0" y2="504.2" stroke="#f0f0f0" stroke-width="1.20"/>
<text x="637" y="507.4" font-size="8.6" font-weight="bold" fill="#fff" text-anchor="end" textLength="10.8" lengthAdjust="spacingAndGlyphs">-12</text>
<line x1="642.3" y1="498.9" x2="646.0" y2="498.9" stroke="#bdbdbd" stroke-width="1.00"/>
<line x1="642.3" y1="493.6" x2="646.0" y2="493.6" stroke="#bdbdbd" stroke-width="1.00"/>
<line x1="642.3" y1="488.3" x2="646.0" y2="488.3" stroke="#bdbdbd" stroke-width="1.00"/>
<line x1="642.3" y1="482.9" x2="646.0" y2="482.9" stroke="#bdbdbd" stroke-width="1.00"/>
<line x1="640.8" y1="477.6" x2="646.0" y2="477.6" stroke="#777" stroke-width="1.50"/>
<line x1="642.3" y1="472.3" x2="646.0" y2="472.3" stroke="#bdbdbd" stroke-width="1.00"/>
<line x1="642.3" y1="467.0" x2="646.0" y2="467.0" stroke="#bdbdbd" stroke-width="1.00"/>
<line x1="642.3" y1="461.6" x2="646.0" y2="461.6" stroke="#bdbdbd" stroke-width="1.00"/>
<line x1="642.3" y1="456.3" x2="646.0" y2="456.3" stroke="#bdbdbd" stroke-width="1.00"/>
<line x1="638.3" y1="451.0" x2="646.0" y2="451.0" stroke="#f0f0f0" stroke-width="1.20"/>
<text x="637" y="454.1" font-size="8.6" font-weight="bold" fill="#fff" text-anchor="end" textLength="6.8" lengthAdjust="spacingAndGlyphs">-9</text>
<line x1="642.3" y1="445.7" x2="646.0" y2="445.7" stroke="#bdbdbd" stroke-width="1.00"/>
<line x1="642.3" y1="440.4" x2="646.0" y2="440.4" stroke="#bdbdbd" stroke-width="1.00"/>
<line x1="642.3" y1="435.0" x2="646.0" y2="435.0" stroke="#bdbdbd" stroke-width="1.00"/>
<line x1="642.3" y1="429.7" x2="646.0" y2="429.7" stroke="#bdbdbd" stroke-width="1.00"/>
<line x1="640.8" y1="424.4" x2="646.0" y2="424.4" stroke="#777" stroke-width="1.50"/>
<line x1="642.3" y1="419.0" x2="646.0" y2="419.0" stroke="#bdbdbd" stroke-width="1.00"/>
<line x1="642.3" y1="413.7" x2="646.0" y2="413.7" stroke="#bdbdbd" stroke-width="1.00"/>
<line x1="642.3" y1="408.4" x2="646.0" y2="408.4" stroke="#bdbdbd" stroke-width="1.00"/>
<line x1="642.3" y1="403.1" x2="646.0" y2="403.1" stroke="#bdbdbd" stroke-width="1.00"/>
<line x1="638.3" y1="397.8" x2="646.0" y2="397.8" stroke="#f0f0f0" stroke-width="1.20"/>
<text x="637" y="400.9" font-size="8.6" font-weight="bold" fill="#fff" text-anchor="end" textLength="6.8" lengthAdjust="spacingAndGlyphs">-6</text>
<line x1="642.3" y1="392.4" x2="646.0" y2="392.4" stroke="#bdbdbd" stroke-width="1.00"/>
<line x1="642.3" y1="387.1" x2="646.0" y2="387.1" stroke="#bdbdbd" stroke-width="1.00"/>
<line x1="642.3" y1="381.8" x2="646.0" y2="381.8" stroke="#bdbdbd" stroke-width="1.00"/>
<line x1="642.3" y1="376.4" x2="646.0" y2="376.4" stroke="#bdbdbd" stroke-width="1.00"/>
<line x1="640.8" y1="371.1" x2="646.0" y2="371.1" stroke="#777" stroke-width="1.50"/>
<line x1="642.3" y1="365.8" x2="646.0" y2="365.8" stroke="#bdbdbd" stroke-width="1.00"/>
<line x1="642.3" y1="360.5" x2="646.0" y2="360.5" stroke="#bdbdbd" stroke-width="1.00"/>
<line x1="642.3" y1="355.1" x2="646.0" y2="355.1" stroke="#bdbdbd" stroke-width="1.00"/>
<line x1="642.3" y1="349.8" x2="646.0" y2="349.8" stroke="#bdbdbd" stroke-width="1.00"/>
<line x1="638.3" y1="344.5" x2="646.0" y2="344.5" stroke="#f0f0f0" stroke-width="1.20"/>
<text x="637" y="347.6" font-size="8.6" font-weight="bold" fill="#fff" text-anchor="end" textLength="6.8" lengthAdjust="spacingAndGlyphs">-3</text>
<line x1="642.3" y1="339.2" x2="646.0" y2="339.2" stroke="#bdbdbd" stroke-width="1.00"/>
<line x1="642.3" y1="333.9" x2="646.0" y2="333.9" stroke="#bdbdbd" stroke-width="1.00"/>
<line x1="642.3" y1="328.5" x2="646.0" y2="328.5" stroke="#bdbdbd" stroke-width="1.00"/>
<line x1="642.3" y1="323.2" x2="646.0" y2="323.2" stroke="#bdbdbd" stroke-width="1.00"/>
<line x1="640.8" y1="317.9" x2="646.0" y2="317.9" stroke="#777" stroke-width="1.50"/>
<line x1="642.3" y1="312.6" x2="646.0" y2="312.6" stroke="#bdbdbd" stroke-width="1.00"/>
<line x1="642.3" y1="307.2" x2="646.0" y2="307.2" stroke="#bdbdbd" stroke-width="1.00"/>
<line x1="642.3" y1="301.9" x2="646.0" y2="301.9" stroke="#bdbdbd" stroke-width="1.00"/>
<line x1="642.3" y1="296.6" x2="646.0" y2="296.6" stroke="#bdbdbd" stroke-width="1.00"/>
<line x1="638.3" y1="291.2" x2="646.0" y2="291.2" stroke="#f0f0f0" stroke-width="1.20"/>
<text x="637" y="294.4" font-size="8.6" font-weight="bold" fill="#fff" text-anchor="end" textLength="4.0" lengthAdjust="spacingAndGlyphs">0</text>
<line x1="642.3" y1="285.9" x2="646.0" y2="285.9" stroke="#bdbdbd" stroke-width="1.00"/>
<line x1="642.3" y1="280.6" x2="646.0" y2="280.6" stroke="#bdbdbd" stroke-width="1.00"/>
<line x1="642.3" y1="275.3" x2="646.0" y2="275.3" stroke="#bdbdbd" stroke-width="1.00"/>
<line x1="642.3" y1="269.9" x2="646.0" y2="269.9" stroke="#bdbdbd" stroke-width="1.00"/>
<line x1="640.8" y1="264.6" x2="646.0" y2="264.6" stroke="#777" stroke-width="1.50"/>
<line x1="642.3" y1="259.3" x2="646.0" y2="259.3" stroke="#bdbdbd" stroke-width="1.00"/>
<line x1="642.3" y1="254.0" x2="646.0" y2="254.0" stroke="#bdbdbd" stroke-width="1.00"/>
<line x1="642.3" y1="248.7" x2="646.0" y2="248.7" stroke="#bdbdbd" stroke-width="1.00"/>
<line x1="642.3" y1="243.3" x2="646.0" y2="243.3" stroke="#bdbdbd" stroke-width="1.00"/>
<line x1="638.3" y1="238.0" x2="646.0" y2="238.0" stroke="#f0f0f0" stroke-width="1.20"/>
<text x="637" y="241.1" font-size="8.6" font-weight="bold" fill="#fff" text-anchor="end" textLength="4.0" lengthAdjust="spacingAndGlyphs">3</text>
<line x1="642.3" y1="232.7" x2="646.0" y2="232.7" stroke="#bdbdbd" stroke-width="1.00"/>
<line x1="642.3" y1="227.4" x2="646.0" y2="227.4" stroke="#bdbdbd" stroke-width="1.00"/>
<line x1="642.3" y1="222.0" x2="646.0" y2="222.0" stroke="#bdbdbd" stroke-width="1.00"/>
<line x1="642.3" y1="216.7" x2="646.0" y2="216.7" stroke="#bdbdbd" stroke-width="1.00"/>
<line x1="640.8" y1="211.4" x2="646.0" y2="211.4" stroke="#777" stroke-width="1.50"/>
<line x1="642.3" y1="206.1" x2="646.0" y2="206.1" stroke="#bdbdbd" stroke-width="1.00"/>
<line x1="642.3" y1="200.7" x2="646.0" y2="200.7" stroke="#bdbdbd" stroke-width="1.00"/>
<line x1="642.3" y1="195.4" x2="646.0" y2="195.4" stroke="#bdbdbd" stroke-width="1.00"/>
<line x1="642.3" y1="190.1" x2="646.0" y2="190.1" stroke="#bdbdbd" stroke-width="1.00"/>
<line x1="638.3" y1="184.8" x2="646.0" y2="184.8" stroke="#f0f0f0" stroke-width="1.20"/>
<text x="637" y="187.8" font-size="8.6" font-weight="bold" fill="#fff" text-anchor="end" textLength="4.0" lengthAdjust="spacingAndGlyphs">6</text>
<line x1="642.3" y1="179.4" x2="646.0" y2="179.4" stroke="#bdbdbd" stroke-width="1.00"/>
<line x1="642.3" y1="174.1" x2="646.0" y2="174.1" stroke="#bdbdbd" stroke-width="1.00"/>
<line x1="642.3" y1="168.8" x2="646.0" y2="168.8" stroke="#bdbdbd" stroke-width="1.00"/>
<line x1="642.3" y1="163.5" x2="646.0" y2="163.5" stroke="#bdbdbd" stroke-width="1.00"/>
<line x1="640.8" y1="158.1" x2="646.0" y2="158.1" stroke="#777" stroke-width="1.50"/>
<line x1="642.3" y1="152.8" x2="646.0" y2="152.8" stroke="#bdbdbd" stroke-width="1.00"/>
<line x1="642.3" y1="147.5" x2="646.0" y2="147.5" stroke="#bdbdbd" stroke-width="1.00"/>
<line x1="642.3" y1="142.2" x2="646.0" y2="142.2" stroke="#bdbdbd" stroke-width="1.00"/>
<line x1="642.3" y1="136.8" x2="646.0" y2="136.8" stroke="#bdbdbd" stroke-width="1.00"/>
<line x1="638.3" y1="131.5" x2="646.0" y2="131.5" stroke="#f0f0f0" stroke-width="1.20"/>
<text x="637" y="134.6" font-size="8.6" font-weight="bold" fill="#fff" text-anchor="end" textLength="4.0" lengthAdjust="spacingAndGlyphs">9</text>
<line x1="642.3" y1="126.2" x2="646.0" y2="126.2" stroke="#bdbdbd" stroke-width="1.00"/>
<line x1="642.3" y1="120.8" x2="646.0" y2="120.8" stroke="#bdbdbd" stroke-width="1.00"/>
<line x1="642.3" y1="115.5" x2="646.0" y2="115.5" stroke="#bdbdbd" stroke-width="1.00"/>
<line x1="642.3" y1="110.2" x2="646.0" y2="110.2" stroke="#bdbdbd" stroke-width="1.00"/>
<line x1="640.8" y1="104.9" x2="646.0" y2="104.9" stroke="#777" stroke-width="1.50"/>
<line x1="642.3" y1="99.6" x2="646.0" y2="99.6" stroke="#bdbdbd" stroke-width="1.00"/>
<line x1="642.3" y1="94.2" x2="646.0" y2="94.2" stroke="#bdbdbd" stroke-width="1.00"/>
<line x1="642.3" y1="88.9" x2="646.0" y2="88.9" stroke="#bdbdbd" stroke-width="1.00"/>
<line x1="642.3" y1="83.6" x2="646.0" y2="83.6" stroke="#bdbdbd" stroke-width="1.00"/>
<line x1="638.3" y1="78.2" x2="646.0" y2="78.2" stroke="#f0f0f0" stroke-width="1.20"/>
<text x="637" y="81.3" font-size="8.6" font-weight="bold" fill="#fff" text-anchor="end" textLength="8.1" lengthAdjust="spacingAndGlyphs">12</text>
<line x1="642.3" y1="72.9" x2="646.0" y2="72.9" stroke="#bdbdbd" stroke-width="1.00"/>
<line x1="642.3" y1="67.6" x2="646.0" y2="67.6" stroke="#bdbdbd" stroke-width="1.00"/>
<line x1="642.3" y1="62.3" x2="646.0" y2="62.3" stroke="#bdbdbd" stroke-width="1.00"/>
<line x1="642.3" y1="57.0" x2="646.0" y2="57.0" stroke="#bdbdbd" stroke-width="1.00"/>
<line x1="640.8" y1="51.6" x2="646.0" y2="51.6" stroke="#777" stroke-width="1.50"/>
<line x1="642.3" y1="46.3" x2="646.0" y2="46.3" stroke="#bdbdbd" stroke-width="1.00"/>
<text x="662.5" y="36.3" font-size="8.6" font-weight="bold" fill="#fff" text-anchor="end" textLength="31.9" lengthAdjust="spacingAndGlyphs">14.011 λ</text>
<text x="662.5" y="548.3" font-size="8.6" font-weight="bold" fill="#fff" text-anchor="end" textLength="35" lengthAdjust="spacingAndGlyphs">-13.716 λ</text>
<path d="M657 43.5 L664.5 39.5 L664.5 47.5 Z" fill="#c03a3a" stroke="#e07070" stroke-width="0.6"/>
<path d="M657 535 L664.5 530 L664.5 540 Z" fill="#1c6cff"/>
<rect x="11.0" y="9.0" width="1.4" height="1.4" fill="#3c3f46"/><rect x="11.9" y="9.9" width="1.2" height="1.2" fill="#fff"/><rect x="14.0" y="9.0" width="1.4" height="1.4" fill="#3c3f46"/><rect x="14.9" y="9.9" width="1.2" height="1.2" fill="#fff"/><rect x="17.0" y="9.0" width="1.4" height="1.4" fill="#3c3f46"/><rect x="17.9" y="9.9" width="1.2" height="1.2" fill="#fff"/><rect x="20.0" y="9.0" width="1.4" height="1.4" fill="#3c3f46"/><rect x="20.9" y="9.9" width="1.2" height="1.2" fill="#fff"/>
<rect x="11.0" y="66.0" width="1.4" height="1.4" fill="#3c3f46"/><rect x="11.9" y="66.9" width="1.2" height="1.2" fill="#fff"/><rect x="14.0" y="66.0" width="1.4" height="1.4" fill="#3c3f46"/><rect x="14.9" y="66.9" width="1.2" height="1.2" fill="#fff"/><rect x="17.0" y="66.0" width="1.4" height="1.4" fill="#3c3f46"/><rect x="17.9" y="66.9" width="1.2" height="1.2" fill="#fff"/><rect x="20.0" y="66.0" width="1.4" height="1.4" fill="#3c3f46"/><rect x="20.9" y="66.9" width="1.2" height="1.2" fill="#fff"/>
<g transform="translate(9.8 18.0)">
<path d="M0.6 0.8 L9.8 2.4 L9.6 10 L0.8 9 Z" fill="#2f74c4" stroke="#2a5c9c" stroke-width="0.8"/>
<path d="M1.2 5.5 L4.2 2.4 L5.8 2.7 L1.3 7.6Z" fill="#ffa000"/><path d="M1.3 7.6 L5.8 2.7 L7.4 3 L2 8.6 L1.3 8.5Z" fill="#ff28d8"/><path d="M2 8.6 L7.4 3 L9 3.3 L4.2 8.9Z" fill="#18e838"/><path d="M4.2 8.9 L9 3.3 L9.1 6 L6.4 9.2Z" fill="#10c8b8"/>
<rect x="7" y="6.2" width="3.8" height="4.4" rx="0.6" fill="#eef6f4" stroke="#b07a8c" stroke-width="0.6"/>
</g>
<g transform="translate(9.8 34.4)">
<path d="M0.6 0.8 L9.8 2.4 L9.6 10 L0.8 9 Z" fill="#2f74c4" stroke="#2a5c9c" stroke-width="0.8"/>
<path d="M1.2 5.5 L4.2 2.4 L5.8 2.7 L1.3 7.6Z" fill="#ffa000"/><path d="M1.3 7.6 L5.8 2.7 L7.4 3 L2 8.6 L1.3 8.5Z" fill="#ff28d8"/><path d="M2 8.6 L7.4 3 L9 3.3 L4.2 8.9Z" fill="#18e838"/><path d="M4.2 8.9 L9 3.3 L9.1 6 L6.4 9.2Z" fill="#10c8b8"/>
<circle cx="8.6" cy="8.8" r="2.6" fill="#4aa828" stroke="#2f7a18" stroke-width="0.5"/><path d="M8.6 7.3 v2.2 M7.4 8.8 l1.2 1.5 l1.2 -1.5" stroke="#fff" stroke-width="0.8" fill="none"/>
</g>
<rect x="17.5" y="52.8" width="1.3" height="5.4" fill="#fff"/><path d="M19.5 52.8 l3.4 2.7 l-3.4 2.7 z" fill="#fff" stroke="#222" stroke-width="0.5"/>
<polygon points="10.0,73.2 13.4,73.2 12.4,74.2 14.8,76.6 13.4,78.0 11.0,75.6 10.0,76.6" fill="#86b93f" stroke="#5b8a22" stroke-width="0.7" stroke-linejoin="round"/><polygon points="22.0,73.2 18.6,73.2 19.6,74.2 17.2,76.6 18.6,78.0 21.0,75.6 22.0,76.6" fill="#86b93f" stroke="#5b8a22" stroke-width="0.7" stroke-linejoin="round"/><polygon points="10.0,84.6 13.4,84.6 12.4,83.6 14.8,81.2 13.4,79.8 11.0,82.2 10.0,81.2" fill="#86b93f" stroke="#5b8a22" stroke-width="0.7" stroke-linejoin="round"/><polygon points="22.0,84.6 18.6,84.6 19.6,83.6 17.2,81.2 18.6,79.8 21.0,82.2 22.0,81.2" fill="#86b93f" stroke="#5b8a22" stroke-width="0.7" stroke-linejoin="round"/>
<rect x="10.3" y="89.8" width="11.6" height="11.6" fill="#f4f0c8" stroke="#70808c" stroke-width="0.8"/><path d="M10.8 96 l4 -2 l3 5 l-7 2z" fill="#a8d070"/><path d="M17 90.5 h4.5 v5z" fill="#9cc4ec"/><path d="M12.5 91.5 L19.5 100 M16.5 95.5 L13 100.5" stroke="#e05020" stroke-width="1.3" fill="none"/>
<path d="M11 159 v11.5 h11" fill="none" stroke="#9a9da5" stroke-width="0.9"/><path d="M13.5 168 L20.5 160.5" stroke="#a4a7ae" stroke-width="1"/><circle cx="13.8" cy="167.6" r="1.2" fill="#a4a7ae"/><circle cx="20.2" cy="160.8" r="1.2" fill="#a4a7ae"/>
<path d="M11.2 182 L20.2 181.4 L20.6 190.2 L12.2 191.2 Z" fill="#b7b0a8" stroke="#8d857c" stroke-width="0.9"/><path d="M13 184 L19 183.6 L19.2 189 L13.6 189.6 Z" fill="#c9c3bb"/>
<path d="M11.4 228.6 L19.8 228 L20.2 236.4 L12.4 237.4 Z" fill="#c9ccd2" stroke="#9a9da5" stroke-width="0.9"/>
<rect x="10" y="265" width="10" height="11.6" fill="#f8f8f8" stroke="#44474e" stroke-width="0.9"/><rect x="11" y="267" width="2.8" height="8.6" fill="#d82020"/><rect x="13.9" y="271" width="2.6" height="4.6" fill="#2060d0"/><rect x="16.6" y="269.5" width="2.8" height="6.1" fill="#28a038"/>
<path d="M11 287 l5 -0.5 l0.4 5 l-5 0.6z" fill="#c3c6cc" stroke="#a6a9b0" stroke-width="0.8"/><path d="M15 287.5 l5.5 -4.5" stroke="#b4b7be" stroke-width="1.8"/>
<rect x="17.5" y="300.2" width="1.3" height="5.4" fill="#fff"/><path d="M19.5 300.2 l3.4 2.7 l-3.4 2.7 z" fill="#fff" stroke="#222" stroke-width="0.5"/>
<defs><linearGradient id="zt" x1="0.15" y1="0.85" x2="0.85" y2="0.15"><stop offset="0" stop-color="#0000ff"/><stop offset="0.3" stop-color="#00d000"/><stop offset="0.55" stop-color="#ffff00"/><stop offset="0.85" stop-color="#ff0000"/><stop offset="1" stop-color="#ff6060"/></linearGradient><radialGradient id="zp"><stop offset="0" stop-color="#000"/><stop offset="0.35" stop-color="#111"/><stop offset="0.75" stop-color="#888"/><stop offset="1" stop-color="#dcdfe4"/></radialGradient><linearGradient id="za" x1="0" y1="0.2" x2="1" y2="0.8"><stop offset="0" stop-color="#e8e8e8"/><stop offset="0.3" stop-color="#555"/><stop offset="0.5" stop-color="#999"/><stop offset="0.75" stop-color="#f4f4f4"/><stop offset="1" stop-color="#333"/></linearGradient><linearGradient id="zc" x1="0" y1="0.3" x2="1" y2="0.7"><stop offset="0" stop-color="#222"/><stop offset="0.35" stop-color="#999"/><stop offset="0.6" stop-color="#f0f0f0"/><stop offset="1" stop-color="#333"/></linearGradient><radialGradient id="zs"><stop offset="0" stop-color="#fff"/><stop offset="0.25" stop-color="#eee"/><stop offset="0.6" stop-color="#000"/><stop offset="0.85" stop-color="#000"/><stop offset="1" stop-color="#666"/></radialGradient></defs>
<circle cx="142.9" cy="612.8" r="9.0" fill="#0000ff"/>
<circle cx="205.3" cy="612.8" r="9.0" fill="url(#zt)"/>
<circle cx="267.7" cy="612.8" r="8.2" fill="url(#zp)"/>
<circle cx="455.0" cy="612.8" r="8.2" fill="url(#zs)"/>
<path d="M21.3 618.6 l1.9 2.4 l3.2 -5.2" fill="none" stroke="#2a3c8c" stroke-width="1.4"/>
<rect x="328.2" y="573.8" width="1.3" height="1.3" fill="#7c7c7c"/>
<rect x="668.2" y="323.2" width="1.3" height="1.3" fill="#7c7c7c"/>
<rect x="860.3" y="273.0" width="1.3" height="1.3" fill="#7c7c7c"/>
<rect x="871.0" y="420.0" width="1.3" height="1.3" fill="#7c7c7c"/>
<rect x="331.3" y="573.8" width="1.3" height="1.3" fill="#7c7c7c"/>
<rect x="668.2" y="326.5" width="1.3" height="1.3" fill="#7c7c7c"/>
<rect x="863.4" y="273.0" width="1.3" height="1.3" fill="#7c7c7c"/>
<rect x="874.1" y="420.0" width="1.3" height="1.3" fill="#7c7c7c"/>
<rect x="334.4" y="573.8" width="1.3" height="1.3" fill="#7c7c7c"/>
<rect x="668.2" y="329.8" width="1.3" height="1.3" fill="#7c7c7c"/>
<rect x="866.5" y="273.0" width="1.3" height="1.3" fill="#7c7c7c"/>
<rect x="877.2" y="420.0" width="1.3" height="1.3" fill="#7c7c7c"/>
<rect x="337.5" y="573.8" width="1.3" height="1.3" fill="#7c7c7c"/>
<rect x="668.2" y="333.1" width="1.3" height="1.3" fill="#7c7c7c"/>
<rect x="869.6" y="273.0" width="1.3" height="1.3" fill="#7c7c7c"/>
<rect x="880.3" y="420.0" width="1.3" height="1.3" fill="#7c7c7c"/>
<rect x="340.6" y="573.8" width="1.3" height="1.3" fill="#7c7c7c"/>
<rect x="668.2" y="336.4" width="1.3" height="1.3" fill="#7c7c7c"/>
<rect x="872.7" y="273.0" width="1.3" height="1.3" fill="#7c7c7c"/>
<rect x="883.4" y="420.0" width="1.3" height="1.3" fill="#7c7c7c"/>
<rect x="676" y="11.0" width="1.4" height="1.4" fill="#2c2f36"/><rect x="676.9" y="11.9" width="1.1" height="1.1" fill="#fff"/>
<rect x="676" y="14.0" width="1.4" height="1.4" fill="#2c2f36"/><rect x="676.9" y="14.9" width="1.1" height="1.1" fill="#fff"/>
<rect x="676" y="17.0" width="1.4" height="1.4" fill="#2c2f36"/><rect x="676.9" y="17.9" width="1.1" height="1.1" fill="#fff"/>
<rect x="676" y="20.0" width="1.4" height="1.4" fill="#2c2f36"/><rect x="676.9" y="20.9" width="1.1" height="1.1" fill="#fff"/>
<path d="M746.5 9.5 v12.5 h11.5" fill="none" stroke="#8b8e96" stroke-width="0.9"/><path d="M750 17.6 L755 12.2" stroke="#555" stroke-width="1"/><path d="M747.9 16.4 l3.2 0.6 l-2 2.9z" fill="#1030ff"/><path d="M753 11 l3.6 -0.6 l-0.8 3.5z" fill="#e81828"/>
<path d="M771.5 9.5 v12.5 h11.5" fill="none" stroke="#8b8e96" stroke-width="0.9"/><path d="M774.6 12.3 h4.1 v6.3 h2.2" fill="none" stroke="#1a1a1a" stroke-width="1.1"/><path d="M772.5 12.3 l2.5 -2 v4z" fill="#1030ff"/><path d="M783.2 18.6 l-3.2 -2.2 v4.4z" fill="#e81828"/>
<circle cx="834.8" cy="15.3" r="4.8" fill="none" stroke="#9fa2aa" stroke-width="0.9"/>
<circle cx="854.6" cy="15.3" r="4.8" fill="none" stroke="#9fa2aa" stroke-width="0.9"/><path d="M851.8 15.3 h5.6 M854.6 12.5 v5.6" stroke="#9fa2aa" stroke-width="0.9"/>
<circle cx="873.8" cy="15.3" r="4.8" fill="none" stroke="#9fa2aa" stroke-width="0.9"/><path d="M871 15.3 h5.6 M871 15.3 l2 -2" stroke="#9fa2aa" stroke-width="0.9" fill="none"/>
<path d="M933.5 10.5 l-3.5 4.8 l3.5 4.8 M930 15.3 l2.6 0" fill="none" stroke="#9fa2aa" stroke-width="0.9"/>
<path d="M944.5 10 v11 h10" fill="none" stroke="#b4b7be" stroke-width="0.8"/><path d="M946.5 15.3 h6 M949.5 12.3 v6 M951 12 l2.2 2.2 M951 18.6 l2.2 -2.2" fill="none" stroke="#9fa2aa" stroke-width="0.9"/>
<path d="M964.5 15.3 h9 M970.5 11 a5.5 5.5 0 0 1 0 8.6" fill="none" stroke="#9fa2aa" stroke-width="0.9"/>
<path d="M984 15.3 h10 M986.5 13 l-2.5 2.3 l2.5 2.3 M991 11 a5.5 5.5 0 0 1 0 8.6" fill="none" stroke="#9fa2aa" stroke-width="0.9"/>
<path d="M923.5 10 v11 h10" fill="none" stroke="#b4b7be" stroke-width="0.7"/>
<path d="M963.0 10 v11 h10" fill="none" stroke="#b4b7be" stroke-width="0.7"/>
<path d="M982.5 10 v11 h10" fill="none" stroke="#b4b7be" stroke-width="0.7"/>
<path d="M828.0 10 v11 h11" fill="none" stroke="#babdc4" stroke-width="0.6"/>
<path d="M847.5 10 v11 h11" fill="none" stroke="#babdc4" stroke-width="0.6"/>
<path d="M866.5 10 v11 h11" fill="none" stroke="#babdc4" stroke-width="0.6"/>
<path d="M1047 11.5 v9 h10" fill="none" stroke="#b4b7be" stroke-width="0.8"/><path d="M1048 13.5 h9.5 M1054.3 10 v10 M1052.3 10 h4 M1052.3 20 h4" fill="none" stroke="#9fa2aa" stroke-width="0.9"/>
<rect x="1075" y="16.2" width="5" height="1.3" fill="#fff"/><path d="M1075 18.5 h5 l-2.5 3z" fill="#fff" stroke="#333" stroke-width="0.4"/>
<rect x="769.5" y="72.5" width="154.5" height="154.0" fill="none" stroke="#d2d2d2" stroke-width="1.1"/>
<line x1="770.8" y1="72.5" x2="770.8" y2="69.0" stroke="#d2d2d2" stroke-width="1.00"/>
<line x1="770.8" y1="226.5" x2="770.8" y2="230.0" stroke="#d2d2d2" stroke-width="1.00"/>
<line x1="769.5" y1="78.8" x2="766.0" y2="78.8" stroke="#d2d2d2" stroke-width="1.00"/>
<line x1="924.0" y1="78.8" x2="927.5" y2="78.8" stroke="#d2d2d2" stroke-width="1.00"/>
<line x1="776.3" y1="72.5" x2="776.3" y2="69.0" stroke="#d2d2d2" stroke-width="1.00"/>
<line x1="776.3" y1="226.5" x2="776.3" y2="230.0" stroke="#d2d2d2" stroke-width="1.00"/>
<line x1="769.5" y1="84.3" x2="766.0" y2="84.3" stroke="#d2d2d2" stroke-width="1.00"/>
<line x1="924.0" y1="84.3" x2="927.5" y2="84.3" stroke="#d2d2d2" stroke-width="1.00"/>
<line x1="781.9" y1="72.5" x2="781.9" y2="64.0" stroke="#d2d2d2" stroke-width="1.20"/>
<line x1="781.9" y1="226.5" x2="781.9" y2="235.0" stroke="#d2d2d2" stroke-width="1.20"/>
<line x1="769.5" y1="89.9" x2="761.0" y2="89.9" stroke="#d2d2d2" stroke-width="1.20"/>
<line x1="924.0" y1="89.9" x2="932.5" y2="89.9" stroke="#d2d2d2" stroke-width="1.20"/>
<line x1="787.5" y1="72.5" x2="787.5" y2="69.0" stroke="#d2d2d2" stroke-width="1.00"/>
<line x1="787.5" y1="226.5" x2="787.5" y2="230.0" stroke="#d2d2d2" stroke-width="1.00"/>
<line x1="769.5" y1="95.5" x2="766.0" y2="95.5" stroke="#d2d2d2" stroke-width="1.00"/>
<line x1="924.0" y1="95.5" x2="927.5" y2="95.5" stroke="#d2d2d2" stroke-width="1.00"/>
<line x1="793.0" y1="72.5" x2="793.0" y2="69.0" stroke="#d2d2d2" stroke-width="1.00"/>
<line x1="793.0" y1="226.5" x2="793.0" y2="230.0" stroke="#d2d2d2" stroke-width="1.00"/>
<line x1="769.5" y1="101.0" x2="766.0" y2="101.0" stroke="#d2d2d2" stroke-width="1.00"/>
<line x1="924.0" y1="101.0" x2="927.5" y2="101.0" stroke="#d2d2d2" stroke-width="1.00"/>
<line x1="798.6" y1="72.5" x2="798.6" y2="69.0" stroke="#d2d2d2" stroke-width="1.00"/>
<line x1="798.6" y1="226.5" x2="798.6" y2="230.0" stroke="#d2d2d2" stroke-width="1.00"/>
<line x1="769.5" y1="106.6" x2="766.0" y2="106.6" stroke="#d2d2d2" stroke-width="1.00"/>
<line x1="924.0" y1="106.6" x2="927.5" y2="106.6" stroke="#d2d2d2" stroke-width="1.00"/>
<line x1="804.1" y1="72.5" x2="804.1" y2="69.0" stroke="#d2d2d2" stroke-width="1.00"/>
<line x1="804.1" y1="226.5" x2="804.1" y2="230.0" stroke="#d2d2d2" stroke-width="1.00"/>
<line x1="769.5" y1="112.1" x2="766.0" y2="112.1" stroke="#d2d2d2" stroke-width="1.00"/>
<line x1="924.0" y1="112.1" x2="927.5" y2="112.1" stroke="#d2d2d2" stroke-width="1.00"/>
<line x1="809.7" y1="72.5" x2="809.7" y2="67.0" stroke="#d2d2d2" stroke-width="1.20"/>
<line x1="809.7" y1="226.5" x2="809.7" y2="232.0" stroke="#d2d2d2" stroke-width="1.20"/>
<line x1="769.5" y1="117.7" x2="764.0" y2="117.7" stroke="#d2d2d2" stroke-width="1.20"/>
<line x1="924.0" y1="117.7" x2="929.5" y2="117.7" stroke="#d2d2d2" stroke-width="1.20"/>
<line x1="815.3" y1="72.5" x2="815.3" y2="69.0" stroke="#d2d2d2" stroke-width="1.00"/>
<line x1="815.3" y1="226.5" x2="815.3" y2="230.0" stroke="#d2d2d2" stroke-width="1.00"/>
<line x1="769.5" y1="123.3" x2="766.0" y2="123.3" stroke="#d2d2d2" stroke-width="1.00"/>
<line x1="924.0" y1="123.3" x2="927.5" y2="123.3" stroke="#d2d2d2" stroke-width="1.00"/>
<line x1="820.8" y1="72.5" x2="820.8" y2="69.0" stroke="#d2d2d2" stroke-width="1.00"/>
<line x1="820.8" y1="226.5" x2="820.8" y2="230.0" stroke="#d2d2d2" stroke-width="1.00"/>
<line x1="769.5" y1="128.8" x2="766.0" y2="128.8" stroke="#d2d2d2" stroke-width="1.00"/>
<line x1="924.0" y1="128.8" x2="927.5" y2="128.8" stroke="#d2d2d2" stroke-width="1.00"/>
<line x1="826.4" y1="72.5" x2="826.4" y2="69.0" stroke="#d2d2d2" stroke-width="1.00"/>
<line x1="826.4" y1="226.5" x2="826.4" y2="230.0" stroke="#d2d2d2" stroke-width="1.00"/>
<line x1="769.5" y1="134.4" x2="766.0" y2="134.4" stroke="#d2d2d2" stroke-width="1.00"/>
<line x1="924.0" y1="134.4" x2="927.5" y2="134.4" stroke="#d2d2d2" stroke-width="1.00"/>
<line x1="831.9" y1="72.5" x2="831.9" y2="69.0" stroke="#d2d2d2" stroke-width="1.00"/>
<line x1="831.9" y1="226.5" x2="831.9" y2="230.0" stroke="#d2d2d2" stroke-width="1.00"/>
<line x1="769.5" y1="139.9" x2="766.0" y2="139.9" stroke="#d2d2d2" stroke-width="1.00"/>
<line x1="924.0" y1="139.9" x2="927.5" y2="139.9" stroke="#d2d2d2" stroke-width="1.00"/>
<line x1="837.5" y1="72.5" x2="837.5" y2="64.0" stroke="#d2d2d2" stroke-width="1.20"/>
<line x1="837.5" y1="226.5" x2="837.5" y2="235.0" stroke="#d2d2d2" stroke-width="1.20"/>
<line x1="769.5" y1="145.5" x2="761.0" y2="145.5" stroke="#d2d2d2" stroke-width="1.20"/>
<line x1="924.0" y1="145.5" x2="932.5" y2="145.5" stroke="#d2d2d2" stroke-width="1.20"/>
<line x1="843.1" y1="72.5" x2="843.1" y2="69.0" stroke="#d2d2d2" stroke-width="1.00"/>
<line x1="843.1" y1="226.5" x2="843.1" y2="230.0" stroke="#d2d2d2" stroke-width="1.00"/>
<line x1="769.5" y1="151.1" x2="766.0" y2="151.1" stroke="#d2d2d2" stroke-width="1.00"/>
<line x1="924.0" y1="151.1" x2="927.5" y2="151.1" stroke="#d2d2d2" stroke-width="1.00"/>
<line x1="848.6" y1="72.5" x2="848.6" y2="69.0" stroke="#d2d2d2" stroke-width="1.00"/>
<line x1="848.6" y1="226.5" x2="848.6" y2="230.0" stroke="#d2d2d2" stroke-width="1.00"/>
<line x1="769.5" y1="156.6" x2="766.0" y2="156.6" stroke="#d2d2d2" stroke-width="1.00"/>
<line x1="924.0" y1="156.6" x2="927.5" y2="156.6" stroke="#d2d2d2" stroke-width="1.00"/>
<line x1="854.2" y1="72.5" x2="854.2" y2="69.0" stroke="#d2d2d2" stroke-width="1.00"/>
<line x1="854.2" y1="226.5" x2="854.2" y2="230.0" stroke="#d2d2d2" stroke-width="1.00"/>
<line x1="769.5" y1="162.2" x2="766.0" y2="162.2" stroke="#d2d2d2" stroke-width="1.00"/>
<line x1="924.0" y1="162.2" x2="927.5" y2="162.2" stroke="#d2d2d2" stroke-width="1.00"/>
<line x1="859.7" y1="72.5" x2="859.7" y2="69.0" stroke="#d2d2d2" stroke-width="1.00"/>
<line x1="859.7" y1="226.5" x2="859.7" y2="230.0" stroke="#d2d2d2" stroke-width="1.00"/>
<line x1="769.5" y1="167.7" x2="766.0" y2="167.7" stroke="#d2d2d2" stroke-width="1.00"/>
<line x1="924.0" y1="167.7" x2="927.5" y2="167.7" stroke="#d2d2d2" stroke-width="1.00"/>
<line x1="865.3" y1="72.5" x2="865.3" y2="67.0" stroke="#d2d2d2" stroke-width="1.20"/>
<line x1="865.3" y1="226.5" x2="865.3" y2="232.0" stroke="#d2d2d2" stroke-width="1.20"/>
<line x1="769.5" y1="173.3" x2="764.0" y2="173.3" stroke="#d2d2d2" stroke-width="1.20"/>
<line x1="924.0" y1="173.3" x2="929.5" y2="173.3" stroke="#d2d2d2" stroke-width="1.20"/>
<line x1="870.9" y1="72.5" x2="870.9" y2="69.0" stroke="#d2d2d2" stroke-width="1.00"/>
<line x1="870.9" y1="226.5" x2="870.9" y2="230.0" stroke="#d2d2d2" stroke-width="1.00"/>
<line x1="769.5" y1="178.9" x2="766.0" y2="178.9" stroke="#d2d2d2" stroke-width="1.00"/>
<line x1="924.0" y1="178.9" x2="927.5" y2="178.9" stroke="#d2d2d2" stroke-width="1.00"/>
<line x1="876.4" y1="72.5" x2="876.4" y2="69.0" stroke="#d2d2d2" stroke-width="1.00"/>
<line x1="876.4" y1="226.5" x2="876.4" y2="230.0" stroke="#d2d2d2" stroke-width="1.00"/>
<line x1="769.5" y1="184.4" x2="766.0" y2="184.4" stroke="#d2d2d2" stroke-width="1.00"/>
<line x1="924.0" y1="184.4" x2="927.5" y2="184.4" stroke="#d2d2d2" stroke-width="1.00"/>
<line x1="882.0" y1="72.5" x2="882.0" y2="69.0" stroke="#d2d2d2" stroke-width="1.00"/>
<line x1="882.0" y1="226.5" x2="882.0" y2="230.0" stroke="#d2d2d2" stroke-width="1.00"/>
<line x1="769.5" y1="190.0" x2="766.0" y2="190.0" stroke="#d2d2d2" stroke-width="1.00"/>
<line x1="924.0" y1="190.0" x2="927.5" y2="190.0" stroke="#d2d2d2" stroke-width="1.00"/>
<line x1="887.5" y1="72.5" x2="887.5" y2="69.0" stroke="#d2d2d2" stroke-width="1.00"/>
<line x1="887.5" y1="226.5" x2="887.5" y2="230.0" stroke="#d2d2d2" stroke-width="1.00"/>
<line x1="769.5" y1="195.5" x2="766.0" y2="195.5" stroke="#d2d2d2" stroke-width="1.00"/>
<line x1="924.0" y1="195.5" x2="927.5" y2="195.5" stroke="#d2d2d2" stroke-width="1.00"/>
<line x1="893.1" y1="72.5" x2="893.1" y2="64.0" stroke="#d2d2d2" stroke-width="1.20"/>
<line x1="893.1" y1="226.5" x2="893.1" y2="235.0" stroke="#d2d2d2" stroke-width="1.20"/>
<line x1="769.5" y1="201.1" x2="761.0" y2="201.1" stroke="#d2d2d2" stroke-width="1.20"/>
<line x1="924.0" y1="201.1" x2="932.5" y2="201.1" stroke="#d2d2d2" stroke-width="1.20"/>
<line x1="898.7" y1="72.5" x2="898.7" y2="69.0" stroke="#d2d2d2" stroke-width="1.00"/>
<line x1="898.7" y1="226.5" x2="898.7" y2="230.0" stroke="#d2d2d2" stroke-width="1.00"/>
<line x1="769.5" y1="206.7" x2="766.0" y2="206.7" stroke="#d2d2d2" stroke-width="1.00"/>
<line x1="924.0" y1="206.7" x2="927.5" y2="206.7" stroke="#d2d2d2" stroke-width="1.00"/>
<line x1="904.2" y1="72.5" x2="904.2" y2="69.0" stroke="#d2d2d2" stroke-width="1.00"/>
<line x1="904.2" y1="226.5" x2="904.2" y2="230.0" stroke="#d2d2d2" stroke-width="1.00"/>
<line x1="769.5" y1="212.2" x2="766.0" y2="212.2" stroke="#d2d2d2" stroke-width="1.00"/>
<line x1="924.0" y1="212.2" x2="927.5" y2="212.2" stroke="#d2d2d2" stroke-width="1.00"/>
<line x1="909.8" y1="72.5" x2="909.8" y2="69.0" stroke="#d2d2d2" stroke-width="1.00"/>
<line x1="909.8" y1="226.5" x2="909.8" y2="230.0" stroke="#d2d2d2" stroke-width="1.00"/>
<line x1="769.5" y1="217.8" x2="766.0" y2="217.8" stroke="#d2d2d2" stroke-width="1.00"/>
<line x1="924.0" y1="217.8" x2="927.5" y2="217.8" stroke="#d2d2d2" stroke-width="1.00"/>
<line x1="915.3" y1="72.5" x2="915.3" y2="69.0" stroke="#d2d2d2" stroke-width="1.00"/>
<line x1="915.3" y1="226.5" x2="915.3" y2="230.0" stroke="#d2d2d2" stroke-width="1.00"/>
<line x1="769.5" y1="223.3" x2="766.0" y2="223.3" stroke="#d2d2d2" stroke-width="1.00"/>
<line x1="924.0" y1="223.3" x2="927.5" y2="223.3" stroke="#d2d2d2" stroke-width="1.00"/>
<line x1="920.9" y1="72.5" x2="920.9" y2="67.0" stroke="#d2d2d2" stroke-width="1.20"/>
<line x1="920.9" y1="226.5" x2="920.9" y2="232.0" stroke="#d2d2d2" stroke-width="1.20"/>
<text x="781.9" y="55.3" font-size="9.0" font-weight="bold" fill="#fff" text-anchor="middle">1</text>
<text x="781.9" y="249.0" font-size="9.0" font-weight="bold" fill="#fff" text-anchor="middle">1</text>
<text x="753.6" y="93.1" font-size="9.0" font-weight="bold" fill="#fff" text-anchor="middle">1</text>
<text x="939.8" y="93.1" font-size="9.0" font-weight="bold" fill="#fff" text-anchor="middle">1</text>
<text x="837.5" y="55.3" font-size="9.0" font-weight="bold" fill="#fff" text-anchor="middle">2</text>
<text x="837.5" y="249.0" font-size="9.0" font-weight="bold" fill="#fff" text-anchor="middle">2</text>
<text x="753.6" y="148.7" font-size="9.0" font-weight="bold" fill="#fff" text-anchor="middle">2</text>
<text x="939.8" y="148.7" font-size="9.0" font-weight="bold" fill="#fff" text-anchor="middle">2</text>
<text x="893.1" y="55.3" font-size="9.0" font-weight="bold" fill="#fff" text-anchor="middle">3</text>
<text x="893.1" y="249.0" font-size="9.0" font-weight="bold" fill="#fff" text-anchor="middle">3</text>
<text x="753.6" y="204.3" font-size="9.0" font-weight="bold" fill="#fff" text-anchor="middle">3</text>
<text x="939.8" y="204.3" font-size="9.0" font-weight="bold" fill="#fff" text-anchor="middle">3</text>
<text x="845.7" y="43.3" font-size="9.0" font-weight="bold" fill="#fff" text-anchor="middle" textLength="45.5" lengthAdjust="spacingAndGlyphs">X : 2.79 mm</text>
<text x="845.7" y="261.0" font-size="9.0" font-weight="bold" fill="#fff" text-anchor="middle" textLength="45.5" lengthAdjust="spacingAndGlyphs">X : 2.79 mm</text>
<text x="744.3" y="150.5" font-size="9.0" font-weight="bold" fill="#fff" text-anchor="middle" transform="rotate(-90 744.3 150.5)" textLength="45.5" lengthAdjust="spacingAndGlyphs">Y : 2.79 mm</text>
<text x="950.0" y="150.0" font-size="9.0" font-weight="bold" fill="#fff" text-anchor="middle" transform="rotate(90 950.0 150.0)" textLength="45.5" lengthAdjust="spacingAndGlyphs">Y : 2.79 mm</text>
<line x1="848.8" y1="70.0" x2="848.8" y2="228.0" stroke="#f4f4f4" stroke-width="1.10"/>
<line x1="768.0" y1="148.7" x2="926.0" y2="148.7" stroke="#f4f4f4" stroke-width="1.10"/>
<path d="M843.5 63.2 h10.6 l-5.3 7.6z" fill="#101080" stroke="#e8e8f4" stroke-width="0.9"/>
<path d="M844.6 227.5 h8.4 l-4.2 5.2z" fill="#701818" stroke="#e8b0b0" stroke-width="0.8"/>
<path d="M763 144.8 v8.4 l6.2 -4.2z" fill="#1838ff" stroke="#5a78ff" stroke-width="0.6"/>
<path d="M924.5 144.9 v7.8 l5.6 -3.9z" fill="#ff2020" stroke="#ffd0d0" stroke-width="0.8"/>
<text x="932" y="152" font-size="10" fill="#fff" textLength="26" lengthAdjust="spacingAndGlyphs">Slice 2</text>
<text x="849.8" y="243.6" font-size="10" fill="#fff" textLength="25.6" lengthAdjust="spacingAndGlyphs">Slice 1</text>
<rect x="1046.5" y="63" width="9" height="173.8" fill="url(#cb)"/><rect x="1046.5" y="63" width="9" height="173.8" fill="url(#cbs)"/>
<line x1="1044.8" y1="226.3" x2="1046.5" y2="226.3" stroke="#666" stroke-width="1.00"/>
<line x1="1043.5" y1="213.8" x2="1046.5" y2="213.8" stroke="#eee" stroke-width="1.20"/>
<text x="1043.5" y="216.9" font-size="8.6" font-weight="bold" fill="#fff" text-anchor="end" textLength="10.8" lengthAdjust="spacingAndGlyphs">-10</text>
<line x1="1044.8" y1="201.3" x2="1046.5" y2="201.3" stroke="#666" stroke-width="1.00"/>
<line x1="1044.8" y1="188.8" x2="1046.5" y2="188.8" stroke="#666" stroke-width="1.00"/>
<line x1="1044.8" y1="176.2" x2="1046.5" y2="176.2" stroke="#666" stroke-width="1.00"/>
<line x1="1044.8" y1="163.7" x2="1046.5" y2="163.7" stroke="#666" stroke-width="1.00"/>
<line x1="1043.5" y1="151.2" x2="1046.5" y2="151.2" stroke="#eee" stroke-width="1.20"/>
<text x="1043.5" y="154.3" font-size="8.6" font-weight="bold" fill="#fff" text-anchor="end" textLength="4.0" lengthAdjust="spacingAndGlyphs">0</text>
<line x1="1044.8" y1="138.7" x2="1046.5" y2="138.7" stroke="#666" stroke-width="1.00"/>
<line x1="1044.8" y1="126.2" x2="1046.5" y2="126.2" stroke="#666" stroke-width="1.00"/>
<line x1="1044.8" y1="113.6" x2="1046.5" y2="113.6" stroke="#666" stroke-width="1.00"/>
<line x1="1044.8" y1="101.1" x2="1046.5" y2="101.1" stroke="#666" stroke-width="1.00"/>
<line x1="1043.5" y1="88.6" x2="1046.5" y2="88.6" stroke="#eee" stroke-width="1.20"/>
<text x="1043.5" y="91.7" font-size="8.6" font-weight="bold" fill="#fff" text-anchor="end" textLength="8.1" lengthAdjust="spacingAndGlyphs">10</text>
<line x1="1044.8" y1="76.1" x2="1046.5" y2="76.1" stroke="#666" stroke-width="1.00"/>
<line x1="1044.8" y1="63.6" x2="1046.5" y2="63.6" stroke="#666" stroke-width="1.00"/>
<text x="1057.0" y="56.6" font-size="8.6" font-weight="bold" fill="#fff" text-anchor="end" textLength="31.5" lengthAdjust="spacingAndGlyphs">14.011 λ</text>
<text x="1057.0" y="250.0" font-size="8.6" font-weight="bold" fill="#fff" text-anchor="end" textLength="35" lengthAdjust="spacingAndGlyphs">-13.716 λ</text>
<path d="M1055.5 63.4 l3 -1.8 v3.6z" fill="#d04040"/><path d="M1055.5 236.5 l3.4 -2 v4z" fill="#2060ff"/>
<rect x="1066.5" y="30.0" width="1.4" height="1.4" fill="#3c3f46"/><rect x="1067.4" y="30.9" width="1.2" height="1.2" fill="#fff"/><rect x="1069.5" y="30.0" width="1.4" height="1.4" fill="#3c3f46"/><rect x="1070.4" y="30.9" width="1.2" height="1.2" fill="#fff"/><rect x="1072.5" y="30.0" width="1.4" height="1.4" fill="#3c3f46"/><rect x="1073.4" y="30.9" width="1.2" height="1.2" fill="#fff"/><rect x="1075.5" y="30.0" width="1.4" height="1.4" fill="#3c3f46"/><rect x="1076.4" y="30.9" width="1.2" height="1.2" fill="#fff"/>
<polygon points="1065.2,38.0 1068.6,38.0 1067.6,39.0 1070.0,41.4 1068.6,42.8 1066.2,40.4 1065.2,41.4" fill="#86b93f" stroke="#5b8a22" stroke-width="0.7" stroke-linejoin="round"/><polygon points="1077.2,38.0 1073.8,38.0 1074.8,39.0 1072.4,41.4 1073.8,42.8 1076.2,40.4 1077.2,41.4" fill="#86b93f" stroke="#5b8a22" stroke-width="0.7" stroke-linejoin="round"/><polygon points="1065.2,49.4 1068.6,49.4 1067.6,48.4 1070.0,46.0 1068.6,44.6 1066.2,47.0 1065.2,46.0" fill="#86b93f" stroke="#5b8a22" stroke-width="0.7" stroke-linejoin="round"/><polygon points="1077.2,49.4 1073.8,49.4 1074.8,48.4 1072.4,46.0 1073.8,44.6 1076.2,47.0 1077.2,46.0" fill="#86b93f" stroke="#5b8a22" stroke-width="0.7" stroke-linejoin="round"/>
<path d="M1065.2 59 l3 -1.2 l2 1 v4.6 l-2.6 1 l-2.4 -1.2z" fill="#4cae58" stroke="#2f8038" stroke-width="0.5"/><path d="M1070.4 61.2 l3.4 -1.4 l3.2 1.2 v3.4 l-3.4 1.6 l-3.2 -1.4z" fill="#4a8ad4" stroke="#2f60a0" stroke-width="0.5"/><path d="M1068.3 56.8 l3.8 -1.8 l4.2 1.6 v3.2 l-3.8 1.8 l-4.2 -1.6z" fill="#e84848" stroke="#b02828" stroke-width="0.5"/>
<rect x="1073.5" y="72.3" width="1.3" height="5.4" fill="#fff"/><path d="M1075.5 72.3 l3.4 2.7 l-3.4 2.7 z" fill="#fff" stroke="#222" stroke-width="0.5"/>
<rect x="727.5" y="293.5" width="257.5" height="85.0" fill="none" stroke="#d9d9d9" stroke-width="1"/>
<line x1="727.5" y1="310.5" x2="985.0" y2="310.5" stroke="#d9d9d9" stroke-width="1.00"/>
<line x1="723.5" y1="310.5" x2="727.5" y2="310.5" stroke="#9a9a9a" stroke-width="1.00"/>
<line x1="727.5" y1="336.5" x2="985.0" y2="336.5" stroke="#d9d9d9" stroke-width="1.00"/>
<line x1="723.5" y1="336.5" x2="727.5" y2="336.5" stroke="#9a9a9a" stroke-width="1.00"/>
<line x1="727.5" y1="361.5" x2="985.0" y2="361.5" stroke="#d9d9d9" stroke-width="1.00"/>
<line x1="723.5" y1="361.5" x2="727.5" y2="361.5" stroke="#9a9a9a" stroke-width="1.00"/>
<line x1="725.0" y1="302.5" x2="727.5" y2="302.5" stroke="#b0b0b0" stroke-width="1.00"/>
<line x1="725.0" y1="319.5" x2="727.5" y2="319.5" stroke="#b0b0b0" stroke-width="1.00"/>
<line x1="725.0" y1="328.5" x2="727.5" y2="328.5" stroke="#b0b0b0" stroke-width="1.00"/>
<line x1="725.0" y1="345.5" x2="727.5" y2="345.5" stroke="#b0b0b0" stroke-width="1.00"/>
<line x1="725.0" y1="353.5" x2="727.5" y2="353.5" stroke="#b0b0b0" stroke-width="1.00"/>
<line x1="725.0" y1="370.5" x2="727.5" y2="370.5" stroke="#b0b0b0" stroke-width="1.00"/>
<line x1="727.5" y1="293.5" x2="727.5" y2="378.5" stroke="#a8a8a8" stroke-width="1.00"/>
<text x="718.3" y="313.5" font-size="8.6" fill="#111" text-anchor="end" textLength="7.8" lengthAdjust="spacingAndGlyphs">10</text>
<text x="718.3" y="339.5" font-size="8.6" fill="#111" text-anchor="end" textLength="3.9" lengthAdjust="spacingAndGlyphs">0</text>
<text x="718.3" y="364.5" font-size="8.6" fill="#111" text-anchor="end" textLength="10.8" lengthAdjust="spacingAndGlyphs">-10</text>
<text transform="translate(697 336.2) rotate(-90)" font-size="11" fill="#111" text-anchor="middle">λ</text>
<polyline points="731.9,301.2 738.0,308.0 744.1,314.5 750.1,320.7 756.2,326.5 762.3,331.9 768.4,337.0 774.4,341.7 780.5,346.1 786.6,350.2 792.7,353.8 798.8,357.2 804.8,360.1 810.9,362.7 817.0,365.0 823.1,366.9 829.1,368.5 835.2,369.7 841.3,370.5 847.4,371.0 853.4,371.2 859.5,371.0 865.6,370.5 871.7,369.6 877.8,368.4 883.8,366.8 889.9,364.9 896.0,362.7 902.1,360.1 908.1,357.1 914.2,353.9 920.3,350.3 926.4,346.3 932.5,342.0 938.5,337.4 944.6,332.4 950.7,327.1 956.8,321.4 962.8,315.4 968.9,309.1 975.0,302.4" fill="none" stroke="#5b8fc9" stroke-width="0.9" stroke-dasharray="1.6 1"/>
<polyline points="727.6,300.5 733.7,307.4 739.7,313.9 745.8,320.1 751.9,326.0 757.9,331.5 764.0,336.6 770.1,341.4 776.1,345.8 782.2,349.9 788.3,353.6 794.3,356.9 800.4,360.0 806.5,362.6 812.5,364.9 818.6,366.9 824.7,368.5 830.7,369.7 836.8,370.6 842.9,371.1 848.9,371.3 855.0,371.1 861.1,370.6 867.2,369.7 873.2,368.5 879.3,366.9 885.4,364.9 891.4,362.6 897.5,359.9 903.6,356.9 909.6,353.5 915.7,349.7 921.8,345.6 927.8,341.2 933.9,336.4 940.0,331.2 946.0,325.7 952.1,319.8 958.2,313.6 964.2,307.0 970.3,300.0" fill="none" stroke="#c0504d" stroke-width="1.7"/>
<line x1="995.2" y1="301" x2="1010" y2="301" stroke="#5b8fc9" stroke-width="0.9" stroke-dasharray="1.4 1"/>
<line x1="995.2" y1="314.8" x2="1010" y2="314.8" stroke="#c0504d" stroke-width="1.2"/>
<text x="1013.4" y="304.4" font-size="9.5" fill="#111" textLength="23.7" lengthAdjust="spacingAndGlyphs">Slice 1</text>
<text x="1013.4" y="318.2" font-size="9.5" fill="#111" textLength="23.7" lengthAdjust="spacingAndGlyphs">Slice 2</text>
<rect x="1066.0" y="427.0" width="1.4" height="1.4" fill="#3c3f46"/><rect x="1066.9" y="427.9" width="1.2" height="1.2" fill="#fff"/><rect x="1069.0" y="427.0" width="1.4" height="1.4" fill="#3c3f46"/><rect x="1069.9" y="427.9" width="1.2" height="1.2" fill="#fff"/><rect x="1072.0" y="427.0" width="1.4" height="1.4" fill="#3c3f46"/><rect x="1072.9" y="427.9" width="1.2" height="1.2" fill="#fff"/><rect x="1075.0" y="427.0" width="1.4" height="1.4" fill="#3c3f46"/><rect x="1075.9" y="427.9" width="1.2" height="1.2" fill="#fff"/>
<path d="M1066.5 441.5 l3.4 3.4 l6.8 -7.2" fill="none" stroke="#4faf2c" stroke-width="2.1" stroke-linecap="round"/>
<polygon points="1065.2,452.3 1068.6,452.3 1067.6,453.3 1070.0,455.7 1068.6,457.1 1066.2,454.7 1065.2,455.7" fill="#86b93f" stroke="#5b8a22" stroke-width="0.7" stroke-linejoin="round"/><polygon points="1077.2,452.3 1073.8,452.3 1074.8,453.3 1072.4,455.7 1073.8,457.1 1076.2,454.7 1077.2,455.7" fill="#86b93f" stroke="#5b8a22" stroke-width="0.7" stroke-linejoin="round"/><polygon points="1065.2,463.7 1068.6,463.7 1067.6,462.7 1070.0,460.3 1068.6,458.9 1066.2,461.3 1065.2,460.3" fill="#86b93f" stroke="#5b8a22" stroke-width="0.7" stroke-linejoin="round"/><polygon points="1077.2,463.7 1073.8,463.7 1074.8,462.7 1072.4,460.3 1073.8,458.9 1076.2,461.3 1077.2,460.3" fill="#86b93f" stroke="#5b8a22" stroke-width="0.7" stroke-linejoin="round"/>
<rect x="1073.5" y="470.2" width="1.3" height="5.4" fill="#fff"/><path d="M1075.5 470.2 l3.4 2.7 l-3.4 2.7 z" fill="#fff" stroke="#222" stroke-width="0.5"/>
</svg>
</body></html>
